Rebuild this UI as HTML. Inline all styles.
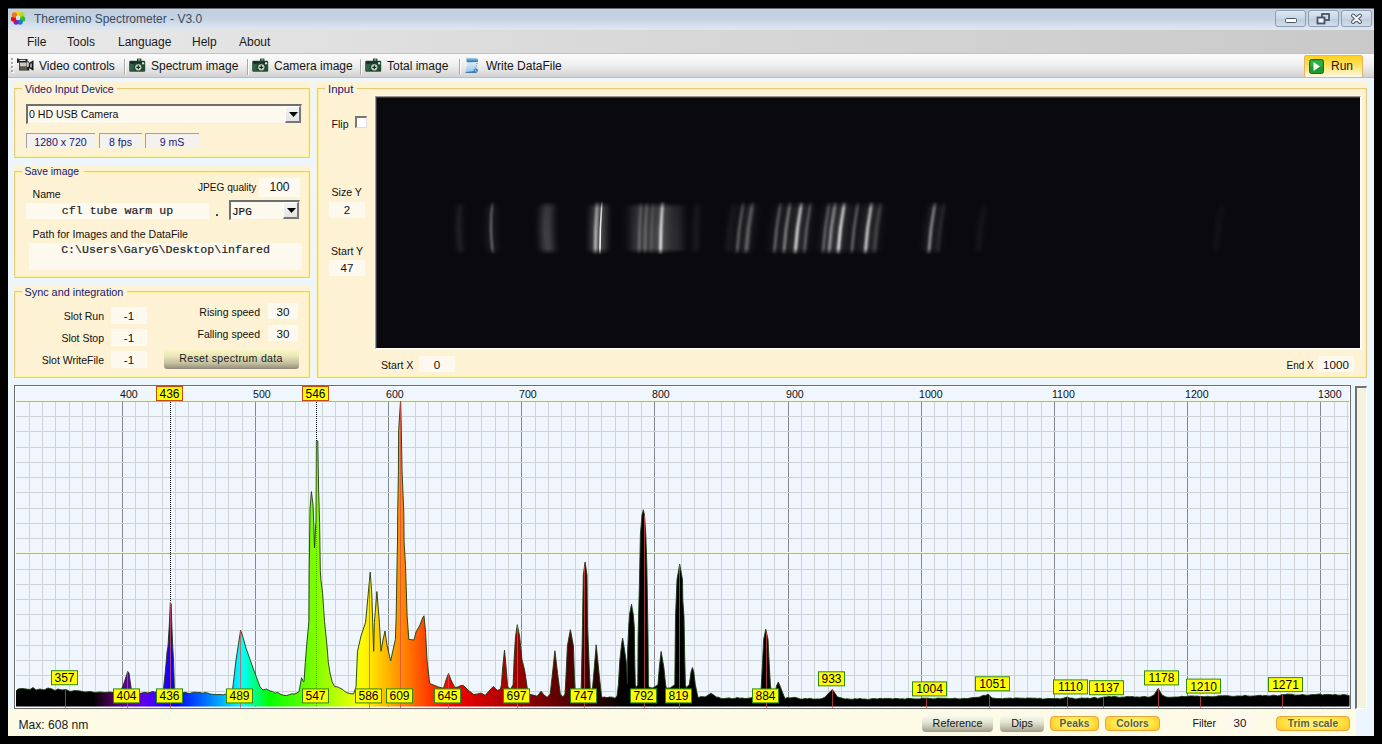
<!DOCTYPE html><html><head><meta charset="utf-8"><style>
html,body{margin:0;padding:0;}
body{width:1382px;height:744px;background:#000;position:relative;overflow:hidden;font-family:'Liberation Sans',sans-serif;}
.t{position:absolute;white-space:pre;}
.r{position:absolute;box-sizing:border-box;}
svg{position:absolute;}
</style></head><body>
<div class="r" style="left:8px;top:8px;width:1366px;height:728px;background:#edf5fd;"></div>
<div class="r" style="left:8px;top:8px;width:1366px;height:22px;border-top:1px solid #646a72;background:linear-gradient(#cdd9e4,#bfcfdd 8%,#c6d4e3 50%,#d8e3ef 85%,#dde7f2);"></div>
<div class="t" style="left:34px;top:13.30px;font-size:12px;line-height:12px;color:#3d4b5c;font-family:'Liberation Sans', sans-serif;">Theremino Spectrometer - V3.0</div>
<svg style="left:9px;top:9px" width="18" height="18" viewBox="0 0 18 18"><circle cx="9.10" cy="4.30" r="2.7" fill="#f8d020"/><circle cx="12.70" cy="6.03" r="2.7" fill="#a8e020"/><circle cx="13.58" cy="9.92" r="2.7" fill="#30c020"/><circle cx="11.10" cy="13.04" r="2.7" fill="#1080d0"/><circle cx="7.10" cy="13.04" r="2.7" fill="#8020c0"/><circle cx="4.62" cy="9.92" r="2.7" fill="#e01010"/><circle cx="5.50" cy="6.03" r="2.7" fill="#f07818"/><circle cx="9.1" cy="8.9" r="2.3" fill="#d8e2ec"/></svg>
<div class="r" style="left:1275px;top:10px;width:31px;height:17px;border:1px solid #8d9db3;border-radius:3px;background:linear-gradient(#dfe8f3,#c9d6e6 50%,#bccbde 51%,#d3deeb);"></div>
<div class="r" style="left:1308px;top:10px;width:31px;height:17px;border:1px solid #8d9db3;border-radius:3px;background:linear-gradient(#dfe8f3,#c9d6e6 50%,#bccbde 51%,#d3deeb);"></div>
<div class="r" style="left:1341px;top:10px;width:31px;height:17px;border:1px solid #8d9db3;border-radius:3px;background:linear-gradient(#dfe8f3,#c9d6e6 50%,#bccbde 51%,#d3deeb);"></div>
<svg style="left:1275px;top:10px" width="100" height="17"><rect x="10.5" y="8.5" width="11" height="4" rx="1" fill="#fff" stroke="#4a5464" stroke-width="1"/><rect x="47" y="4" width="7" height="6" fill="none" stroke="#4a5464" stroke-width="1.8"/><rect x="42.5" y="7.5" width="7" height="6" fill="#dfe8f3" stroke="#4a5464" stroke-width="1.8"/><rect x="44.5" y="9.5" width="3" height="2" fill="#fff"/><path d="M78 5.5 L85 12 M85 5.5 L78 12" stroke="#4a5464" stroke-width="4" stroke-linecap="round"/><path d="M78 5.5 L85 12 M85 5.5 L78 12" stroke="#f4f4f4" stroke-width="2" stroke-linecap="round"/></svg>
<div class="r" style="left:8px;top:30px;width:1366px;height:24px;background:linear-gradient(90deg,#e9e9e9,#dadada 40%,#c9c9c9);border-bottom:1px solid #c2c2c2;"></div>
<div class="t" style="left:27px;top:36.30px;font-size:12px;line-height:12px;color:#1a1a1a;font-family:'Liberation Sans', sans-serif;">File</div>
<div class="t" style="left:67px;top:36.30px;font-size:12px;line-height:12px;color:#1a1a1a;font-family:'Liberation Sans', sans-serif;">Tools</div>
<div class="t" style="left:118px;top:36.30px;font-size:12px;line-height:12px;color:#1a1a1a;font-family:'Liberation Sans', sans-serif;">Language</div>
<div class="t" style="left:192px;top:36.30px;font-size:12px;line-height:12px;color:#1a1a1a;font-family:'Liberation Sans', sans-serif;">Help</div>
<div class="t" style="left:239px;top:36.30px;font-size:12px;line-height:12px;color:#1a1a1a;font-family:'Liberation Sans', sans-serif;">About</div>
<div class="r" style="left:8px;top:54px;width:1366px;height:24px;background:linear-gradient(#fbfbfb,#f0f0f0 45%,#dedede 80%,#d2d2d2);border-bottom:1px solid #bcbcbc;"></div>
<div class="r" style="left:12px;top:59px;width:2px;height:2px;background:#ffffff;"></div>
<div class="r" style="left:11px;top:58px;width:2px;height:2px;background:#a8a8a8;"></div>
<div class="r" style="left:12px;top:63px;width:2px;height:2px;background:#ffffff;"></div>
<div class="r" style="left:11px;top:62px;width:2px;height:2px;background:#a8a8a8;"></div>
<div class="r" style="left:12px;top:67px;width:2px;height:2px;background:#ffffff;"></div>
<div class="r" style="left:11px;top:66px;width:2px;height:2px;background:#a8a8a8;"></div>
<div class="r" style="left:12px;top:71px;width:2px;height:2px;background:#ffffff;"></div>
<div class="r" style="left:11px;top:70px;width:2px;height:2px;background:#a8a8a8;"></div>
<div class="t" style="left:39px;top:60.30px;font-size:12px;line-height:12px;color:#151515;font-family:'Liberation Sans', sans-serif;">Video controls</div>
<div class="t" style="left:151px;top:60.30px;font-size:12px;line-height:12px;color:#151515;font-family:'Liberation Sans', sans-serif;">Spectrum image</div>
<div class="t" style="left:274px;top:60.30px;font-size:12px;line-height:12px;color:#151515;font-family:'Liberation Sans', sans-serif;">Camera image</div>
<div class="t" style="left:387px;top:60.30px;font-size:12px;line-height:12px;color:#151515;font-family:'Liberation Sans', sans-serif;">Total image</div>
<div class="t" style="left:486px;top:60.30px;font-size:12px;line-height:12px;color:#151515;font-family:'Liberation Sans', sans-serif;">Write DataFile</div>
<div class="r" style="left:124px;top:59px;width:2px;height:16px;background:#a8a8a8;border-right:1px solid #fff;"></div>
<div class="r" style="left:247px;top:59px;width:2px;height:16px;background:#a8a8a8;border-right:1px solid #fff;"></div>
<div class="r" style="left:360px;top:59px;width:2px;height:16px;background:#a8a8a8;border-right:1px solid #fff;"></div>
<div class="r" style="left:459px;top:59px;width:2px;height:16px;background:#a8a8a8;border-right:1px solid #fff;"></div>
<svg style="left:17px;top:58px" width="17" height="14" viewBox="0 0 17 14"><rect x="0" y="0.5" width="1.6" height="4.5" fill="#202020"/><rect x="1" y="1" width="9.5" height="3" fill="#262626"/><rect x="2.5" y="1.8" width="6" height="1.2" fill="#d8d8d8"/><rect x="2.2" y="3.5" width="10" height="9" fill="#1c1c1c"/><rect x="3" y="4.5" width="6.5" height="4" fill="#c8c8c8"/><rect x="9.8" y="4.3" width="2" height="4.5" fill="#e0c8c8"/><rect x="3.2" y="9" width="7" height="3" fill="#5a5a38"/><path d="M12 5 L16 2.5 L16.5 2.5 L16.5 12.5 L16 12.5 L12 10 Z" fill="#1a1a1a"/><rect x="13" y="5.5" width="2" height="4" fill="#9a9a9a"/></svg>
<svg style="left:129px;top:58px" width="17" height="15" viewBox="0 0 17 15"><rect x="8" y="0.6" width="4.4" height="3" fill="#1b3d28"/><rect x="9.1" y="1.5" width="2.2" height="1" fill="#d8e8dc"/><rect x="0.2" y="2.8" width="16" height="11" rx="1.2" fill="#234c35"/><rect x="1" y="3.4" width="14.4" height="2" fill="#163524"/><rect x="2.5" y="4" width="2" height="1.3" fill="#0c2014"/><rect x="13" y="4.3" width="2.2" height="2" fill="#d0ecd8"/><rect x="1" y="6" width="3.5" height="6.5" fill="#2f6048"/><circle cx="9.3" cy="9.3" r="3.1" fill="#d4d8cc"/><path d="M9.3 7.3 L9.3 11.3 M7.3 9.3 L11.3 9.3" stroke="#1a2a1e" stroke-width="1.2"/></svg>
<svg style="left:252px;top:58px" width="17" height="15" viewBox="0 0 17 15"><rect x="8" y="0.6" width="4.4" height="3" fill="#1b3d28"/><rect x="9.1" y="1.5" width="2.2" height="1" fill="#d8e8dc"/><rect x="0.2" y="2.8" width="16" height="11" rx="1.2" fill="#234c35"/><rect x="1" y="3.4" width="14.4" height="2" fill="#163524"/><rect x="2.5" y="4" width="2" height="1.3" fill="#0c2014"/><rect x="13" y="4.3" width="2.2" height="2" fill="#d0ecd8"/><rect x="1" y="6" width="3.5" height="6.5" fill="#2f6048"/><circle cx="9.3" cy="9.3" r="3.1" fill="#d4d8cc"/><path d="M9.3 7.3 L9.3 11.3 M7.3 9.3 L11.3 9.3" stroke="#1a2a1e" stroke-width="1.2"/></svg>
<svg style="left:365px;top:58px" width="17" height="15" viewBox="0 0 17 15"><rect x="8" y="0.6" width="4.4" height="3" fill="#1b3d28"/><rect x="9.1" y="1.5" width="2.2" height="1" fill="#d8e8dc"/><rect x="0.2" y="2.8" width="16" height="11" rx="1.2" fill="#234c35"/><rect x="1" y="3.4" width="14.4" height="2" fill="#163524"/><rect x="2.5" y="4" width="2" height="1.3" fill="#0c2014"/><rect x="13" y="4.3" width="2.2" height="2" fill="#d0ecd8"/><rect x="1" y="6" width="3.5" height="6.5" fill="#2f6048"/><circle cx="9.3" cy="9.3" r="3.1" fill="#d4d8cc"/><path d="M9.3 7.3 L9.3 11.3 M7.3 9.3 L11.3 9.3" stroke="#1a2a1e" stroke-width="1.2"/></svg>
<svg style="left:464px;top:57px" width="16" height="18" viewBox="0 0 16 18"><defs><linearGradient id="sp" x1="0" y1="0" x2="0" y2="1"><stop offset="0" stop-color="#e4f2fb"/><stop offset="1" stop-color="#9cc8ea"/></linearGradient><linearGradient id="sr" x1="0" y1="0" x2="0" y2="1"><stop offset="0" stop-color="#9fd4f4"/><stop offset="0.5" stop-color="#5f9cd0"/><stop offset="1" stop-color="#2f6aa0"/></linearGradient></defs><path d="M3.5 4.5 L13.5 4 L11.5 14 L1.5 15 Z" fill="url(#sp)"/><path d="M13.5 4 L12.8 7 M12.5 8.5 L11.8 11.5" stroke="#4a7ca8" stroke-width="1" stroke-dasharray="1 1"/><path d="M2.5 1.5 Q2 0.8 3 0.8 L13 1.2 Q14.5 1.5 14 3.5 Q13.5 5 12.5 5 L3.5 5.2 Q2 5 2.5 1.5 Z" fill="url(#sr)"/><path d="M9.5 12 L13 11.5 Q14.5 12.5 13.5 15 Q12.5 16.2 11 16 L2 16 Q1 15.5 1.5 15 L10 14 Z" fill="#3f7bb0"/><path d="M10.5 12.5 Q12.5 12.8 12 15" stroke="#9fd0f0" stroke-width="1" fill="none"/></svg>
<div class="r" style="left:1304px;top:55px;width:59px;height:23px;border:1px solid #e6b55c;border-radius:2px;background:linear-gradient(#ffd21e,#ffe36a 50%,#fff3c6 85%,#fff8e4);"></div>
<svg style="left:1309px;top:59px" width="15" height="15" viewBox="0 0 15 15"><rect x="0.5" y="0.5" width="14" height="14" rx="2" fill="#1e9a30" stroke="#107020"/><rect x="1.5" y="1.5" width="12" height="6" rx="1" fill="#3cc050" opacity="0.6"/><path d="M4.5 3 L11 7.5 L4.5 12 Z" fill="#f4fff4"/></svg>
<div class="t" style="left:1331px;top:60.30px;font-size:12px;line-height:12px;color:#1a1a1a;font-family:'Liberation Sans', sans-serif;">Run</div>
<div class="r" style="left:14px;top:82px;width:297px;height:76px;background:#fdf2d4;"></div>
<div class="r" style="left:14px;top:88px;width:296px;height:70px;border:1px solid #e3cd7c;"></div>
<div class="r" style="left:15px;top:89px;width:294px;height:68px;border:1px solid #fdf39c;"></div>
<div class="r" style="left:22px;top:85px;width:95px;height:7px;background:#fdf2d4;"></div>
<div class="t" style="left:25px;top:84.49px;font-size:10.6px;line-height:10.6px;color:#17176e;font-family:'Liberation Sans', sans-serif;">Video Input Device</div>
<div class="r" style="left:14px;top:165px;width:297px;height:113px;background:#fdf2d4;"></div>
<div class="r" style="left:14px;top:171px;width:296px;height:107px;border:1px solid #e3cd7c;"></div>
<div class="r" style="left:15px;top:172px;width:294px;height:105px;border:1px solid #fdf39c;"></div>
<div class="r" style="left:21.5px;top:168px;width:62.0px;height:7px;background:#fdf2d4;"></div>
<div class="t" style="left:24.5px;top:167.49px;font-size:10.3px;line-height:10.3px;color:#17176e;font-family:'Liberation Sans', sans-serif;">Save image</div>
<div class="r" style="left:14px;top:285px;width:297px;height:93px;background:#fdf2d4;"></div>
<div class="r" style="left:14px;top:291px;width:296px;height:87px;border:1px solid #e3cd7c;"></div>
<div class="r" style="left:15px;top:292px;width:294px;height:85px;border:1px solid #fdf39c;"></div>
<div class="r" style="left:21.5px;top:288px;width:105.0px;height:7px;background:#fdf2d4;"></div>
<div class="t" style="left:24.5px;top:287.49px;font-size:10.85px;line-height:10.85px;color:#17176e;font-family:'Liberation Sans', sans-serif;">Sync and integration</div>
<div class="r" style="left:316px;top:82px;width:1052px;height:296px;background:#fdf2d4;"></div>
<div class="r" style="left:317px;top:88px;width:1050px;height:290px;border:1px solid #e3cd7c;"></div>
<div class="r" style="left:318px;top:89px;width:1048px;height:288px;border:1px solid #fdf39c;"></div>
<div class="r" style="left:325px;top:85px;width:32px;height:7px;background:#fdf2d4;"></div>
<div class="t" style="left:328px;top:84.49px;font-size:11.4px;line-height:11.4px;color:#17176e;font-family:'Liberation Sans', sans-serif;">Input</div>
<div class="r" style="left:26px;top:104px;width:276px;height:20px;background:#fdf9ee;border-top:2px solid #6f6f6f;border-left:2px solid #6f6f6f;border-bottom:1px solid #f4f0e0;border-right:1px solid #f4f0e0;"></div>
<div class="r" style="left:285px;top:106px;width:16px;height:17px;background:linear-gradient(#f4f4f4,#e4e4e4);border-right:2px solid #777;border-bottom:2px solid #777;border-top:1px solid #fff;border-left:1px solid #fff;"></div>
<svg style="left:289.0px;top:112.0px" width="9" height="5"><path d="M0 0 L9 0 L4.5 5 Z" fill="#000"/></svg>
<div class="t" style="left:29px;top:109.49px;font-size:10.6px;line-height:10.6px;color:#111;font-family:'Liberation Sans', sans-serif;">0 HD USB Camera</div>
<div class="r" style="left:26px;top:133px;width:69px;height:15px;background:#f3f2ee;border-top:1px solid #a0a0a0;border-left:1px solid #a0a0a0;"></div>
<div class="t" style="left:26.0px;width:69px;text-align:center;top:136.99px;font-size:10.6px;line-height:10.6px;color:#17176e;font-family:'Liberation Sans', sans-serif;">1280 x 720</div>
<div class="r" style="left:99px;top:133px;width:43px;height:15px;background:#f3f2ee;border-top:1px solid #a0a0a0;border-left:1px solid #a0a0a0;"></div>
<div class="t" style="left:99.0px;width:43px;text-align:center;top:136.99px;font-size:10.6px;line-height:10.6px;color:#17176e;font-family:'Liberation Sans', sans-serif;">8 fps</div>
<div class="r" style="left:145px;top:133px;width:54px;height:15px;background:#f3f2ee;border-top:1px solid #a0a0a0;border-left:1px solid #a0a0a0;"></div>
<div class="t" style="left:145.0px;width:54px;text-align:center;top:136.99px;font-size:10.6px;line-height:10.6px;color:#17176e;font-family:'Liberation Sans', sans-serif;">9 mS</div>
<div class="t" style="left:32.5px;top:188.99px;font-size:10.6px;line-height:10.6px;color:#111;font-family:'Liberation Sans', sans-serif;">Name</div>
<div class="t" style="left:198px;top:182.91px;font-size:10.1px;line-height:10.1px;color:#111;font-family:'Liberation Sans', sans-serif;">JPEG quality</div>
<div class="r" style="left:259px;top:178px;width:41px;height:19px;background:#fdf9ef;"></div>
<div class="t" style="left:259.5px;width:40px;text-align:center;top:181.30px;font-size:12px;line-height:12px;color:#111;font-family:'Liberation Sans', sans-serif;">100</div>
<div class="r" style="left:26px;top:203px;width:183px;height:16px;background:#fdf9ef;"></div>
<div class="t" style="left:26.0px;width:183px;text-align:center;top:204.98px;font-size:11.6px;line-height:11.6px;color:#222;font-family:'Liberation Mono', monospace;-webkit-text-stroke:0.2px #222;">cfl tube warm up</div>
<div class="r" style="left:216px;top:214px;width:2px;height:2px;background:#3a3a3a;border-radius:0.5px;"></div>
<div class="r" style="left:229px;top:200px;width:71px;height:20px;background:#fdf9ee;border-top:2px solid #6f6f6f;border-left:2px solid #6f6f6f;border-bottom:1px solid #f4f0e0;border-right:1px solid #f4f0e0;"></div>
<div class="r" style="left:283px;top:202px;width:16px;height:17px;background:linear-gradient(#f4f4f4,#e4e4e4);border-right:2px solid #777;border-bottom:2px solid #777;border-top:1px solid #fff;border-left:1px solid #fff;"></div>
<svg style="left:287.0px;top:208.0px" width="9" height="5"><path d="M0 0 L9 0 L4.5 5 Z" fill="#000"/></svg>
<div class="t" style="left:232px;top:207.14px;font-size:11px;line-height:11px;color:#111;font-family:'Liberation Mono', monospace;-webkit-text-stroke:0.2px #111;">JPG</div>
<div class="t" style="left:32.5px;top:229.49px;font-size:10.6px;line-height:10.6px;color:#111;font-family:'Liberation Sans', sans-serif;">Path for Images and the DataFile</div>
<div class="r" style="left:29px;top:243px;width:273px;height:27px;background:#fdf9ef;"></div>
<div class="t" style="left:29.0px;width:273px;text-align:center;top:243.98px;font-size:11.6px;line-height:11.6px;color:#222;font-family:'Liberation Mono', monospace;-webkit-text-stroke:0.2px #222;">C:\Users\GaryG\Desktop\infared</div>
<div class="t" style="right:1278px;top:310.77px;font-size:10.5px;line-height:10.5px;color:#111;font-family:'Liberation Sans', sans-serif;">Slot Run</div>
<div class="r" style="left:111px;top:307px;width:36px;height:17px;background:#fdf9ef;"></div>
<div class="t" style="left:111.0px;width:36px;text-align:center;top:309.84px;font-size:11.6px;line-height:11.6px;color:#111;font-family:'Liberation Sans', sans-serif;">-1</div>
<div class="t" style="right:1278px;top:332.77px;font-size:10.5px;line-height:10.5px;color:#111;font-family:'Liberation Sans', sans-serif;">Slot Stop</div>
<div class="r" style="left:111px;top:329px;width:36px;height:17px;background:#fdf9ef;"></div>
<div class="t" style="left:111.0px;width:36px;text-align:center;top:331.84px;font-size:11.6px;line-height:11.6px;color:#111;font-family:'Liberation Sans', sans-serif;">-1</div>
<div class="t" style="right:1278px;top:354.77px;font-size:10.5px;line-height:10.5px;color:#111;font-family:'Liberation Sans', sans-serif;">Slot WriteFile</div>
<div class="r" style="left:111px;top:351px;width:36px;height:17px;background:#fdf9ef;"></div>
<div class="t" style="left:111.0px;width:36px;text-align:center;top:353.84px;font-size:11.6px;line-height:11.6px;color:#111;font-family:'Liberation Sans', sans-serif;">-1</div>
<div class="t" style="right:1122px;top:307.07px;font-size:10.5px;line-height:10.5px;color:#111;font-family:'Liberation Sans', sans-serif;">Rising speed</div>
<div class="r" style="left:268px;top:303px;width:30px;height:16px;background:#fdf9ef;"></div>
<div class="t" style="left:268.0px;width:30px;text-align:center;top:306.14px;font-size:11.6px;line-height:11.6px;color:#111;font-family:'Liberation Sans', sans-serif;">30</div>
<div class="t" style="right:1122px;top:328.57px;font-size:10.5px;line-height:10.5px;color:#111;font-family:'Liberation Sans', sans-serif;">Falling speed</div>
<div class="r" style="left:268px;top:325px;width:30px;height:16px;background:#fdf9ef;"></div>
<div class="t" style="left:268.0px;width:30px;text-align:center;top:327.64px;font-size:11.6px;line-height:11.6px;color:#111;font-family:'Liberation Sans', sans-serif;">30</div>
<div class="r" style="left:164px;top:350px;width:135px;height:19px;border-radius:3px;background:linear-gradient(#f9f6c4,#ebe7b8 30%,#c4bfa0 70%,#8f8a78);"></div>
<div class="t" style="left:163.5px;width:135px;text-align:center;top:353.49px;font-size:10.6px;line-height:10.6px;color:#1a1a1a;font-family:'Liberation Sans', sans-serif;letter-spacing:0.3px;">Reset spectrum data</div>
<div class="t" style="left:331.5px;top:119.49px;font-size:10.6px;line-height:10.6px;color:#111;font-family:'Liberation Sans', sans-serif;">Flip</div>
<div class="r" style="left:355px;top:116px;width:12px;height:12px;background:#fff;border-top:2px solid #777;border-left:2px solid #777;border-right:1px solid #ddd;border-bottom:1px solid #ddd;"></div>
<div class="t" style="left:331.5px;top:187.49px;font-size:10.6px;line-height:10.6px;color:#111;font-family:'Liberation Sans', sans-serif;">Size Y</div>
<div class="r" style="left:329px;top:202px;width:36px;height:16px;background:#fdf9ef;"></div>
<div class="t" style="left:329.0px;width:36px;text-align:center;top:204.14px;font-size:11.6px;line-height:11.6px;color:#111;font-family:'Liberation Sans', sans-serif;">2</div>
<div class="t" style="left:331px;top:246.49px;font-size:10.6px;line-height:10.6px;color:#111;font-family:'Liberation Sans', sans-serif;">Start Y</div>
<div class="r" style="left:329px;top:260px;width:36px;height:16px;background:#fdf9ef;"></div>
<div class="t" style="left:329.0px;width:36px;text-align:center;top:262.14px;font-size:11.6px;line-height:11.6px;color:#111;font-family:'Liberation Sans', sans-serif;">47</div>
<div class="t" style="left:381px;top:359.99px;font-size:10.6px;line-height:10.6px;color:#111;font-family:'Liberation Sans', sans-serif;">Start X</div>
<div class="r" style="left:419px;top:356px;width:36px;height:16px;background:#fdf9ef;"></div>
<div class="t" style="left:419.0px;width:36px;text-align:center;top:359.14px;font-size:11.6px;line-height:11.6px;color:#111;font-family:'Liberation Sans', sans-serif;">0</div>
<div class="t" style="left:1286.5px;top:360.50px;font-size:10px;line-height:10px;color:#111;font-family:'Liberation Sans', sans-serif;">End X</div>
<div class="r" style="left:1318px;top:356px;width:36px;height:16px;background:#fdf9ef;"></div>
<div class="t" style="left:1318.0px;width:36px;text-align:center;top:359.14px;font-size:11.6px;line-height:11.6px;color:#111;font-family:'Liberation Sans', sans-serif;">1000</div>
<div class="r" style="left:374px;top:95px;width:988px;height:255px;border-top:1px solid #fffbeb;border-left:1px solid #fffbeb;border-right:1px solid #fff9ea;border-bottom:1px solid #fff9ea;"></div>
<div class="r" style="left:375px;top:96px;width:986px;height:253px;border-top:1px solid #9b978c;border-left:1px solid #9b978c;border-right:1px solid #fdfdfd;border-bottom:1px solid #fdfdfd;"></div>
<div class="r" style="left:376px;top:97px;width:984px;height:251px;border-top:1px solid #3a3a3a;border-left:1px solid #3a3a3a;background:#0a090d;"></div>
<svg style="left:377px;top:98px" width="983" height="250" viewBox="377 98 983 250"><defs><linearGradient id="vf" x1="0" y1="0" x2="0" y2="1"><stop offset="0" stop-color="#fff" stop-opacity="0.3"/><stop offset="0.12" stop-color="#fff" stop-opacity="1"/><stop offset="0.85" stop-color="#fff" stop-opacity="1"/><stop offset="1" stop-color="#fff" stop-opacity="0.3"/></linearGradient><filter id="b0_6" filterUnits="userSpaceOnUse" x="377" y="98" width="983" height="250"><feGaussianBlur stdDeviation="0.6 1.5"/></filter><filter id="b0_8" filterUnits="userSpaceOnUse" x="377" y="98" width="983" height="250"><feGaussianBlur stdDeviation="0.8 1.5"/></filter><filter id="b0_9" filterUnits="userSpaceOnUse" x="377" y="98" width="983" height="250"><feGaussianBlur stdDeviation="0.9 1.5"/></filter><filter id="b1_1" filterUnits="userSpaceOnUse" x="377" y="98" width="983" height="250"><feGaussianBlur stdDeviation="1.1 1.5"/></filter><filter id="b1_2" filterUnits="userSpaceOnUse" x="377" y="98" width="983" height="250"><feGaussianBlur stdDeviation="1.2 1.5"/></filter><filter id="b1_3" filterUnits="userSpaceOnUse" x="377" y="98" width="983" height="250"><feGaussianBlur stdDeviation="1.3 1.5"/></filter><filter id="b1_4" filterUnits="userSpaceOnUse" x="377" y="98" width="983" height="250"><feGaussianBlur stdDeviation="1.4 1.5"/></filter><filter id="b1_6" filterUnits="userSpaceOnUse" x="377" y="98" width="983" height="250"><feGaussianBlur stdDeviation="1.6 1.5"/></filter><filter id="b2" filterUnits="userSpaceOnUse" x="377" y="98" width="983" height="250"><feGaussianBlur stdDeviation="2 1.5"/></filter><filter id="b2_5" filterUnits="userSpaceOnUse" x="377" y="98" width="983" height="250"><feGaussianBlur stdDeviation="2.5 1.5"/></filter><filter id="b4" filterUnits="userSpaceOnUse" x="377" y="98" width="983" height="250"><feGaussianBlur stdDeviation="4 1.5"/></filter><filter id="b5_0" filterUnits="userSpaceOnUse" x="377" y="98" width="983" height="250"><feGaussianBlur stdDeviation="5.0 1.5"/></filter><mask id="vm" maskUnits="userSpaceOnUse" x="377" y="98" width="983" height="250"><rect x="377" y="98" width="983" height="250" fill="url(#vf2)"/></mask><linearGradient id="vf2" gradientUnits="userSpaceOnUse" x1="0" y1="200" x2="0" y2="256"><stop offset="0" stop-color="#fff" stop-opacity="0"/><stop offset="0.15" stop-color="#fff" stop-opacity="0.85"/><stop offset="0.6" stop-color="#fff" stop-opacity="1"/><stop offset="0.86" stop-color="#fff" stop-opacity="1"/><stop offset="1" stop-color="#fff" stop-opacity="0"/></linearGradient></defs><g mask="url(#vm)"><rect x="630" y="204" width="52" height="48" fill="#fff" opacity="0.15" filter="url(#b5_0)"/><rect x="591" y="204" width="15" height="48" fill="#fff" opacity="0.12" filter="url(#b5_0)"/><path d="M460.3 202 Q457.1 227.5 460.8 254" stroke="#fff" stroke-opacity="0.045" stroke-width="6" fill="none" filter="url(#b5_0)"/><path d="M460.3 202 Q457.1 227.5 460.8 254" stroke="#fff" stroke-opacity="0.13" stroke-width="3" fill="none" filter="url(#b2)"/><path d="M492.5 202 Q489.2 227.5 493.0 254" stroke="#fff" stroke-opacity="0.175" stroke-width="4.6" fill="none" filter="url(#b5_0)"/><path d="M492.5 202 Q489.2 227.5 493.0 254" stroke="#fff" stroke-opacity="0.5" stroke-width="1.6" fill="none" filter="url(#b0_8)"/><path d="M548.0 202 Q544.8 227.5 548.5 254" stroke="#fff" stroke-opacity="0.087" stroke-width="11" fill="none" filter="url(#b5_0)"/><path d="M548.0 202 Q544.8 227.5 548.5 254" stroke="#fff" stroke-opacity="0.25" stroke-width="8" fill="none" filter="url(#b4)"/><path d="M597.3 202 Q595.3 227.5 595.3 254" stroke="#fff" stroke-opacity="0.210" stroke-width="6" fill="none" filter="url(#b5_0)"/><path d="M597.3 202 Q595.3 227.5 595.3 254" stroke="#fff" stroke-opacity="0.6" stroke-width="3" fill="none" filter="url(#b1_2)"/><path d="M601.9 202 Q599.9 227.5 599.9 254" stroke="#fff" stroke-opacity="0.332" stroke-width="4.6" fill="none" filter="url(#b5_0)"/><path d="M601.9 202 Q599.9 227.5 599.9 254" stroke="#fff" stroke-opacity="0.95" stroke-width="1.6" fill="none" filter="url(#b0_6)"/><path d="M641.0 202 Q639.0 227.5 639.0 254" stroke="#fff" stroke-opacity="0.105" stroke-width="5" fill="none" filter="url(#b5_0)"/><path d="M641.0 202 Q639.0 227.5 639.0 254" stroke="#fff" stroke-opacity="0.3" stroke-width="2" fill="none" filter="url(#b1_2)"/><path d="M647.0 202 Q645.0 227.5 645.0 254" stroke="#fff" stroke-opacity="0.105" stroke-width="5" fill="none" filter="url(#b5_0)"/><path d="M647.0 202 Q645.0 227.5 645.0 254" stroke="#fff" stroke-opacity="0.3" stroke-width="2" fill="none" filter="url(#b1_2)"/><path d="M653.1 202 Q651.1 227.5 651.1 254" stroke="#fff" stroke-opacity="0.070" stroke-width="5" fill="none" filter="url(#b5_0)"/><path d="M653.1 202 Q651.1 227.5 651.1 254" stroke="#fff" stroke-opacity="0.2" stroke-width="2" fill="none" filter="url(#b1_3)"/><path d="M662.5 202 Q660.5 227.5 660.5 254" stroke="#fff" stroke-opacity="0.332" stroke-width="5.6" fill="none" filter="url(#b5_0)"/><path d="M662.5 202 Q660.5 227.5 660.5 254" stroke="#fff" stroke-opacity="0.95" stroke-width="2.6" fill="none" filter="url(#b0_9)"/><path d="M697.5 202 Q695.5 227.5 695.5 254" stroke="#fff" stroke-opacity="0.028" stroke-width="7" fill="none" filter="url(#b5_0)"/><path d="M697.5 202 Q695.5 227.5 695.5 254" stroke="#fff" stroke-opacity="0.08" stroke-width="4" fill="none" filter="url(#b2_5)"/><path d="M734.0 202 Q729.2 227.5 727.5 254" stroke="#fff" stroke-opacity="0.028" stroke-width="6" fill="none" filter="url(#b5_0)"/><path d="M734.0 202 Q729.2 227.5 727.5 254" stroke="#fff" stroke-opacity="0.08" stroke-width="3" fill="none" filter="url(#b2)"/><path d="M743.4 202 Q738.6 227.5 736.9 254" stroke="#fff" stroke-opacity="0.105" stroke-width="5.8" fill="none" filter="url(#b5_0)"/><path d="M743.4 202 Q738.6 227.5 736.9 254" stroke="#fff" stroke-opacity="0.3" stroke-width="2.8" fill="none" filter="url(#b1_3)"/><path d="M752.5 202 Q747.8 227.5 746.0 254" stroke="#fff" stroke-opacity="0.140" stroke-width="6" fill="none" filter="url(#b5_0)"/><path d="M752.5 202 Q747.8 227.5 746.0 254" stroke="#fff" stroke-opacity="0.4" stroke-width="3" fill="none" filter="url(#b1_4)"/><path d="M780.7 202 Q776.0 227.5 774.2 254" stroke="#fff" stroke-opacity="0.112" stroke-width="5.8" fill="none" filter="url(#b5_0)"/><path d="M780.7 202 Q776.0 227.5 774.2 254" stroke="#fff" stroke-opacity="0.32" stroke-width="2.8" fill="none" filter="url(#b1_3)"/><path d="M790.2 202 Q785.5 227.5 783.7 254" stroke="#fff" stroke-opacity="0.147" stroke-width="6" fill="none" filter="url(#b5_0)"/><path d="M790.2 202 Q785.5 227.5 783.7 254" stroke="#fff" stroke-opacity="0.42" stroke-width="3" fill="none" filter="url(#b1_3)"/><path d="M801.6 202 Q796.9 227.5 795.1 254" stroke="#fff" stroke-opacity="0.280" stroke-width="6" fill="none" filter="url(#b5_0)"/><path d="M801.6 202 Q796.9 227.5 795.1 254" stroke="#fff" stroke-opacity="0.8" stroke-width="3" fill="none" filter="url(#b1_1)"/><path d="M810.7 202 Q806.0 227.5 804.2 254" stroke="#fff" stroke-opacity="0.105" stroke-width="5.8" fill="none" filter="url(#b5_0)"/><path d="M810.7 202 Q806.0 227.5 804.2 254" stroke="#fff" stroke-opacity="0.3" stroke-width="2.8" fill="none" filter="url(#b1_3)"/><path d="M829.4 202 Q824.6 227.5 822.9 254" stroke="#fff" stroke-opacity="0.105" stroke-width="5.8" fill="none" filter="url(#b5_0)"/><path d="M829.4 202 Q824.6 227.5 822.9 254" stroke="#fff" stroke-opacity="0.3" stroke-width="2.8" fill="none" filter="url(#b1_3)"/><path d="M835.4 202 Q830.6 227.5 828.9 254" stroke="#fff" stroke-opacity="0.175" stroke-width="6" fill="none" filter="url(#b5_0)"/><path d="M835.4 202 Q830.6 227.5 828.9 254" stroke="#fff" stroke-opacity="0.5" stroke-width="3" fill="none" filter="url(#b1_2)"/><path d="M844.5 202 Q839.8 227.5 838.0 254" stroke="#fff" stroke-opacity="0.297" stroke-width="6" fill="none" filter="url(#b5_0)"/><path d="M844.5 202 Q839.8 227.5 838.0 254" stroke="#fff" stroke-opacity="0.85" stroke-width="3" fill="none" filter="url(#b1_1)"/><path d="M858.1 202 Q853.4 227.5 851.6 254" stroke="#fff" stroke-opacity="0.115" stroke-width="5.8" fill="none" filter="url(#b5_0)"/><path d="M858.1 202 Q853.4 227.5 851.6 254" stroke="#fff" stroke-opacity="0.33" stroke-width="2.8" fill="none" filter="url(#b1_3)"/><path d="M871.7 202 Q867.0 227.5 865.2 254" stroke="#fff" stroke-opacity="0.262" stroke-width="6" fill="none" filter="url(#b5_0)"/><path d="M871.7 202 Q867.0 227.5 865.2 254" stroke="#fff" stroke-opacity="0.75" stroke-width="3" fill="none" filter="url(#b1_1)"/><path d="M880.8 202 Q876.0 227.5 874.3 254" stroke="#fff" stroke-opacity="0.087" stroke-width="5.8" fill="none" filter="url(#b5_0)"/><path d="M880.8 202 Q876.0 227.5 874.3 254" stroke="#fff" stroke-opacity="0.25" stroke-width="2.8" fill="none" filter="url(#b1_4)"/><path d="M935.1 202 Q930.4 227.5 928.6 254" stroke="#fff" stroke-opacity="0.175" stroke-width="5.8" fill="none" filter="url(#b5_0)"/><path d="M935.1 202 Q930.4 227.5 928.6 254" stroke="#fff" stroke-opacity="0.5" stroke-width="2.8" fill="none" filter="url(#b1_2)"/><path d="M944.1 202 Q939.4 227.5 937.6 254" stroke="#fff" stroke-opacity="0.049" stroke-width="5.5" fill="none" filter="url(#b5_0)"/><path d="M944.1 202 Q939.4 227.5 937.6 254" stroke="#fff" stroke-opacity="0.14" stroke-width="2.5" fill="none" filter="url(#b1_6)"/><path d="M984.5 202 Q979.8 227.5 978.0 254" stroke="#fff" stroke-opacity="0.028" stroke-width="5.5" fill="none" filter="url(#b5_0)"/><path d="M984.5 202 Q979.8 227.5 978.0 254" stroke="#fff" stroke-opacity="0.08" stroke-width="2.5" fill="none" filter="url(#b2)"/><path d="M1222.0 202 Q1217.2 227.5 1215.5 254" stroke="#fff" stroke-opacity="0.025" stroke-width="5" fill="none" filter="url(#b5_0)"/><path d="M1222.0 202 Q1217.2 227.5 1215.5 254" stroke="#fff" stroke-opacity="0.07" stroke-width="2" fill="none" filter="url(#b2)"/></g></svg>
<svg style="left:14px;top:385px" width="1337" height="324" viewBox="14 385 1337 324" shape-rendering="auto"><defs><linearGradient id="spec" gradientUnits="userSpaceOnUse" x1="14" y1="0" x2="1350" y2="0"><stop offset="0.0033" stop-color="#000000"/><stop offset="0.0073" stop-color="#000000"/><stop offset="0.0113" stop-color="#000000"/><stop offset="0.0153" stop-color="#000000"/><stop offset="0.0193" stop-color="#000000"/><stop offset="0.0232" stop-color="#000000"/><stop offset="0.0272" stop-color="#000000"/><stop offset="0.0312" stop-color="#000000"/><stop offset="0.0352" stop-color="#000000"/><stop offset="0.0392" stop-color="#000000"/><stop offset="0.0432" stop-color="#000000"/><stop offset="0.0472" stop-color="#000000"/><stop offset="0.0512" stop-color="#000000"/><stop offset="0.0551" stop-color="#000000"/><stop offset="0.0591" stop-color="#000000"/><stop offset="0.0631" stop-color="#170018"/><stop offset="0.0671" stop-color="#2c0031"/><stop offset="0.0711" stop-color="#3d0049"/><stop offset="0.0751" stop-color="#4a0061"/><stop offset="0.0791" stop-color="#550079"/><stop offset="0.0831" stop-color="#5c0092"/><stop offset="0.0870" stop-color="#6000aa"/><stop offset="0.0910" stop-color="#6100c2"/><stop offset="0.0950" stop-color="#5f00db"/><stop offset="0.0990" stop-color="#5900f3"/><stop offset="0.1030" stop-color="#4c00ff"/><stop offset="0.1070" stop-color="#3c00ff"/><stop offset="0.1110" stop-color="#2a00ff"/><stop offset="0.1150" stop-color="#1a00ff"/><stop offset="0.1189" stop-color="#0800ff"/><stop offset="0.1229" stop-color="#000aff"/><stop offset="0.1269" stop-color="#001fff"/><stop offset="0.1309" stop-color="#0033ff"/><stop offset="0.1349" stop-color="#0047ff"/><stop offset="0.1389" stop-color="#005cff"/><stop offset="0.1429" stop-color="#0070ff"/><stop offset="0.1469" stop-color="#0085ff"/><stop offset="0.1508" stop-color="#0099ff"/><stop offset="0.1548" stop-color="#00adff"/><stop offset="0.1588" stop-color="#00c2ff"/><stop offset="0.1628" stop-color="#00d6ff"/><stop offset="0.1668" stop-color="#00ebff"/><stop offset="0.1708" stop-color="#00ffff"/><stop offset="0.1748" stop-color="#00ffcc"/><stop offset="0.1787" stop-color="#00ff99"/><stop offset="0.1827" stop-color="#00ff66"/><stop offset="0.1867" stop-color="#00ff33"/><stop offset="0.1907" stop-color="#00ff00"/><stop offset="0.1947" stop-color="#0fff00"/><stop offset="0.1987" stop-color="#1dff00"/><stop offset="0.2027" stop-color="#2cff00"/><stop offset="0.2067" stop-color="#3aff00"/><stop offset="0.2106" stop-color="#49ff00"/><stop offset="0.2146" stop-color="#57ff00"/><stop offset="0.2186" stop-color="#66ff00"/><stop offset="0.2226" stop-color="#75ff00"/><stop offset="0.2266" stop-color="#83ff00"/><stop offset="0.2306" stop-color="#92ff00"/><stop offset="0.2346" stop-color="#a0ff00"/><stop offset="0.2386" stop-color="#afff00"/><stop offset="0.2425" stop-color="#bdff00"/><stop offset="0.2465" stop-color="#ccff00"/><stop offset="0.2505" stop-color="#dbff00"/><stop offset="0.2545" stop-color="#e9ff00"/><stop offset="0.2585" stop-color="#f8ff00"/><stop offset="0.2625" stop-color="#fff700"/><stop offset="0.2665" stop-color="#ffe700"/><stop offset="0.2705" stop-color="#ffd800"/><stop offset="0.2744" stop-color="#ffc800"/><stop offset="0.2784" stop-color="#ffb800"/><stop offset="0.2824" stop-color="#ffa900"/><stop offset="0.2864" stop-color="#ff9900"/><stop offset="0.2904" stop-color="#ff8900"/><stop offset="0.2944" stop-color="#ff7a00"/><stop offset="0.2984" stop-color="#ff6a00"/><stop offset="0.3023" stop-color="#ff5a00"/><stop offset="0.3063" stop-color="#ff4b00"/><stop offset="0.3103" stop-color="#ff3b00"/><stop offset="0.3143" stop-color="#ff2b00"/><stop offset="0.3183" stop-color="#ff1b00"/><stop offset="0.3223" stop-color="#ff0c00"/><stop offset="0.3263" stop-color="#fd0000"/><stop offset="0.3303" stop-color="#f50000"/><stop offset="0.3342" stop-color="#ee0000"/><stop offset="0.3382" stop-color="#e60000"/><stop offset="0.3422" stop-color="#de0000"/><stop offset="0.3462" stop-color="#d70000"/><stop offset="0.3502" stop-color="#cf0000"/><stop offset="0.3542" stop-color="#c70000"/><stop offset="0.3582" stop-color="#c00000"/><stop offset="0.3622" stop-color="#b80000"/><stop offset="0.3661" stop-color="#b00000"/><stop offset="0.3701" stop-color="#a90000"/><stop offset="0.3741" stop-color="#a10000"/><stop offset="0.3781" stop-color="#990000"/><stop offset="0.3821" stop-color="#920000"/><stop offset="0.3861" stop-color="#8a0000"/><stop offset="0.3901" stop-color="#820000"/><stop offset="0.3941" stop-color="#7b0000"/><stop offset="0.3980" stop-color="#730000"/><stop offset="0.4020" stop-color="#6b0000"/><stop offset="0.4060" stop-color="#640000"/><stop offset="0.4100" stop-color="#5c0000"/><stop offset="0.4140" stop-color="#540000"/><stop offset="0.4180" stop-color="#4d0000"/><stop offset="0.4220" stop-color="#450000"/><stop offset="0.4259" stop-color="#3d0000"/><stop offset="0.4299" stop-color="#360000"/><stop offset="0.4339" stop-color="#2e0000"/><stop offset="0.4379" stop-color="#260000"/><stop offset="0.4419" stop-color="#1f0000"/><stop offset="0.4459" stop-color="#170000"/><stop offset="0.4499" stop-color="#0f0000"/><stop offset="0.4539" stop-color="#080000"/><stop offset="0.4578" stop-color="#000000"/><stop offset="0.4618" stop-color="#000000"/><stop offset="0.4658" stop-color="#000000"/><stop offset="0.4698" stop-color="#000000"/><stop offset="0.4738" stop-color="#000000"/><stop offset="0.4778" stop-color="#000000"/><stop offset="0.4818" stop-color="#000000"/><stop offset="0.4858" stop-color="#000000"/><stop offset="0.4897" stop-color="#000000"/><stop offset="0.4937" stop-color="#000000"/><stop offset="0.4977" stop-color="#000000"/><stop offset="0.5017" stop-color="#000000"/><stop offset="0.5057" stop-color="#000000"/><stop offset="0.5097" stop-color="#000000"/><stop offset="0.5137" stop-color="#000000"/><stop offset="0.5177" stop-color="#000000"/><stop offset="0.5216" stop-color="#000000"/><stop offset="0.5256" stop-color="#000000"/><stop offset="0.5296" stop-color="#000000"/><stop offset="0.5336" stop-color="#000000"/><stop offset="0.5376" stop-color="#000000"/><stop offset="0.5416" stop-color="#000000"/><stop offset="0.5456" stop-color="#000000"/><stop offset="0.5496" stop-color="#000000"/><stop offset="0.5535" stop-color="#000000"/><stop offset="0.5575" stop-color="#000000"/><stop offset="0.5615" stop-color="#000000"/><stop offset="0.5655" stop-color="#000000"/><stop offset="0.5695" stop-color="#000000"/><stop offset="0.5735" stop-color="#000000"/><stop offset="0.5775" stop-color="#000000"/><stop offset="0.5814" stop-color="#000000"/><stop offset="0.5854" stop-color="#000000"/><stop offset="0.5894" stop-color="#000000"/><stop offset="0.5934" stop-color="#000000"/><stop offset="0.5974" stop-color="#000000"/><stop offset="0.6014" stop-color="#000000"/><stop offset="0.6054" stop-color="#000000"/><stop offset="0.6094" stop-color="#000000"/><stop offset="0.6133" stop-color="#000000"/><stop offset="0.6173" stop-color="#000000"/><stop offset="0.6213" stop-color="#000000"/><stop offset="0.6253" stop-color="#000000"/><stop offset="0.6293" stop-color="#000000"/><stop offset="0.6333" stop-color="#000000"/><stop offset="0.6373" stop-color="#000000"/><stop offset="0.6413" stop-color="#000000"/><stop offset="0.6452" stop-color="#000000"/><stop offset="0.6492" stop-color="#000000"/><stop offset="0.6532" stop-color="#000000"/><stop offset="0.6572" stop-color="#000000"/><stop offset="0.6612" stop-color="#000000"/><stop offset="0.6652" stop-color="#000000"/><stop offset="0.6692" stop-color="#000000"/><stop offset="0.6732" stop-color="#000000"/><stop offset="0.6771" stop-color="#000000"/><stop offset="0.6811" stop-color="#000000"/><stop offset="0.6851" stop-color="#000000"/><stop offset="0.6891" stop-color="#000000"/><stop offset="0.6931" stop-color="#000000"/><stop offset="0.6971" stop-color="#000000"/><stop offset="0.7011" stop-color="#000000"/><stop offset="0.7050" stop-color="#000000"/><stop offset="0.7090" stop-color="#000000"/><stop offset="0.7130" stop-color="#000000"/><stop offset="0.7170" stop-color="#000000"/><stop offset="0.7210" stop-color="#000000"/><stop offset="0.7250" stop-color="#000000"/><stop offset="0.7290" stop-color="#000000"/><stop offset="0.7330" stop-color="#000000"/><stop offset="0.7369" stop-color="#000000"/><stop offset="0.7409" stop-color="#000000"/><stop offset="0.7449" stop-color="#000000"/><stop offset="0.7489" stop-color="#000000"/><stop offset="0.7529" stop-color="#000000"/><stop offset="0.7569" stop-color="#000000"/><stop offset="0.7609" stop-color="#000000"/><stop offset="0.7649" stop-color="#000000"/><stop offset="0.7688" stop-color="#000000"/><stop offset="0.7728" stop-color="#000000"/><stop offset="0.7768" stop-color="#000000"/><stop offset="0.7808" stop-color="#000000"/><stop offset="0.7848" stop-color="#000000"/><stop offset="0.7888" stop-color="#000000"/><stop offset="0.7928" stop-color="#000000"/><stop offset="0.7968" stop-color="#000000"/><stop offset="0.8007" stop-color="#000000"/><stop offset="0.8047" stop-color="#000000"/><stop offset="0.8087" stop-color="#000000"/><stop offset="0.8127" stop-color="#000000"/><stop offset="0.8167" stop-color="#000000"/><stop offset="0.8207" stop-color="#000000"/><stop offset="0.8247" stop-color="#000000"/><stop offset="0.8286" stop-color="#000000"/><stop offset="0.8326" stop-color="#000000"/><stop offset="0.8366" stop-color="#000000"/><stop offset="0.8406" stop-color="#000000"/><stop offset="0.8446" stop-color="#000000"/><stop offset="0.8486" stop-color="#000000"/><stop offset="0.8526" stop-color="#000000"/><stop offset="0.8566" stop-color="#000000"/><stop offset="0.8605" stop-color="#000000"/><stop offset="0.8645" stop-color="#000000"/><stop offset="0.8685" stop-color="#000000"/><stop offset="0.8725" stop-color="#000000"/><stop offset="0.8765" stop-color="#000000"/><stop offset="0.8805" stop-color="#000000"/><stop offset="0.8845" stop-color="#000000"/><stop offset="0.8885" stop-color="#000000"/><stop offset="0.8924" stop-color="#000000"/><stop offset="0.8964" stop-color="#000000"/><stop offset="0.9004" stop-color="#000000"/><stop offset="0.9044" stop-color="#000000"/><stop offset="0.9084" stop-color="#000000"/><stop offset="0.9124" stop-color="#000000"/><stop offset="0.9164" stop-color="#000000"/><stop offset="0.9204" stop-color="#000000"/><stop offset="0.9243" stop-color="#000000"/><stop offset="0.9283" stop-color="#000000"/><stop offset="0.9323" stop-color="#000000"/><stop offset="0.9363" stop-color="#000000"/><stop offset="0.9403" stop-color="#000000"/><stop offset="0.9443" stop-color="#000000"/><stop offset="0.9483" stop-color="#000000"/><stop offset="0.9522" stop-color="#000000"/><stop offset="0.9562" stop-color="#000000"/><stop offset="0.9602" stop-color="#000000"/><stop offset="0.9642" stop-color="#000000"/><stop offset="0.9682" stop-color="#000000"/><stop offset="0.9722" stop-color="#000000"/><stop offset="0.9762" stop-color="#000000"/><stop offset="0.9802" stop-color="#000000"/><stop offset="0.9841" stop-color="#000000"/><stop offset="0.9881" stop-color="#000000"/><stop offset="0.9921" stop-color="#000000"/><stop offset="0.9961" stop-color="#000000"/></linearGradient></defs><rect x="14.5" y="385.5" width="1336" height="323" fill="#eff6fd" stroke="#6d6d6d" stroke-width="1"/><path d="M15.5 707.5 L15.5 386.5 L1349.5 386.5 L1349.5 707.5 Z" fill="none" stroke="#fbfdff" stroke-width="1"/><line x1="29.5" y1="402" x2="29.5" y2="707" stroke="#d0d3d6" stroke-width="1"/><line x1="42.5" y1="402" x2="42.5" y2="707" stroke="#d0d3d6" stroke-width="1"/><line x1="55.5" y1="402" x2="55.5" y2="707" stroke="#d0d3d6" stroke-width="1"/><line x1="69.5" y1="402" x2="69.5" y2="707" stroke="#d0d3d6" stroke-width="1"/><line x1="82.5" y1="402" x2="82.5" y2="707" stroke="#d0d3d6" stroke-width="1"/><line x1="95.5" y1="402" x2="95.5" y2="707" stroke="#d0d3d6" stroke-width="1"/><line x1="108.5" y1="402" x2="108.5" y2="707" stroke="#d0d3d6" stroke-width="1"/><line x1="122.5" y1="402" x2="122.5" y2="707" stroke="#85898d" stroke-width="1"/><line x1="135.5" y1="402" x2="135.5" y2="707" stroke="#d0d3d6" stroke-width="1"/><line x1="148.5" y1="402" x2="148.5" y2="707" stroke="#d0d3d6" stroke-width="1"/><line x1="162.5" y1="402" x2="162.5" y2="707" stroke="#d0d3d6" stroke-width="1"/><line x1="175.5" y1="402" x2="175.5" y2="707" stroke="#d0d3d6" stroke-width="1"/><line x1="188.5" y1="402" x2="188.5" y2="707" stroke="#d0d3d6" stroke-width="1"/><line x1="202.5" y1="402" x2="202.5" y2="707" stroke="#d0d3d6" stroke-width="1"/><line x1="215.5" y1="402" x2="215.5" y2="707" stroke="#d0d3d6" stroke-width="1"/><line x1="228.5" y1="402" x2="228.5" y2="707" stroke="#d0d3d6" stroke-width="1"/><line x1="242.5" y1="402" x2="242.5" y2="707" stroke="#d0d3d6" stroke-width="1"/><line x1="255.5" y1="402" x2="255.5" y2="707" stroke="#85898d" stroke-width="1"/><line x1="268.5" y1="402" x2="268.5" y2="707" stroke="#d0d3d6" stroke-width="1"/><line x1="282.5" y1="402" x2="282.5" y2="707" stroke="#d0d3d6" stroke-width="1"/><line x1="295.5" y1="402" x2="295.5" y2="707" stroke="#d0d3d6" stroke-width="1"/><line x1="308.5" y1="402" x2="308.5" y2="707" stroke="#d0d3d6" stroke-width="1"/><line x1="322.5" y1="402" x2="322.5" y2="707" stroke="#d0d3d6" stroke-width="1"/><line x1="335.5" y1="402" x2="335.5" y2="707" stroke="#d0d3d6" stroke-width="1"/><line x1="348.5" y1="402" x2="348.5" y2="707" stroke="#d0d3d6" stroke-width="1"/><line x1="362.5" y1="402" x2="362.5" y2="707" stroke="#d0d3d6" stroke-width="1"/><line x1="375.5" y1="402" x2="375.5" y2="707" stroke="#d0d3d6" stroke-width="1"/><line x1="388.5" y1="402" x2="388.5" y2="707" stroke="#85898d" stroke-width="1"/><line x1="401.5" y1="402" x2="401.5" y2="707" stroke="#d0d3d6" stroke-width="1"/><line x1="415.5" y1="402" x2="415.5" y2="707" stroke="#d0d3d6" stroke-width="1"/><line x1="428.5" y1="402" x2="428.5" y2="707" stroke="#d0d3d6" stroke-width="1"/><line x1="441.5" y1="402" x2="441.5" y2="707" stroke="#d0d3d6" stroke-width="1"/><line x1="455.5" y1="402" x2="455.5" y2="707" stroke="#d0d3d6" stroke-width="1"/><line x1="468.5" y1="402" x2="468.5" y2="707" stroke="#d0d3d6" stroke-width="1"/><line x1="481.5" y1="402" x2="481.5" y2="707" stroke="#d0d3d6" stroke-width="1"/><line x1="495.5" y1="402" x2="495.5" y2="707" stroke="#d0d3d6" stroke-width="1"/><line x1="508.5" y1="402" x2="508.5" y2="707" stroke="#d0d3d6" stroke-width="1"/><line x1="521.5" y1="402" x2="521.5" y2="707" stroke="#85898d" stroke-width="1"/><line x1="535.5" y1="402" x2="535.5" y2="707" stroke="#d0d3d6" stroke-width="1"/><line x1="548.5" y1="402" x2="548.5" y2="707" stroke="#d0d3d6" stroke-width="1"/><line x1="561.5" y1="402" x2="561.5" y2="707" stroke="#d0d3d6" stroke-width="1"/><line x1="575.5" y1="402" x2="575.5" y2="707" stroke="#d0d3d6" stroke-width="1"/><line x1="588.5" y1="402" x2="588.5" y2="707" stroke="#d0d3d6" stroke-width="1"/><line x1="601.5" y1="402" x2="601.5" y2="707" stroke="#d0d3d6" stroke-width="1"/><line x1="615.5" y1="402" x2="615.5" y2="707" stroke="#d0d3d6" stroke-width="1"/><line x1="628.5" y1="402" x2="628.5" y2="707" stroke="#d0d3d6" stroke-width="1"/><line x1="641.5" y1="402" x2="641.5" y2="707" stroke="#d0d3d6" stroke-width="1"/><line x1="654.5" y1="402" x2="654.5" y2="707" stroke="#85898d" stroke-width="1"/><line x1="668.5" y1="402" x2="668.5" y2="707" stroke="#d0d3d6" stroke-width="1"/><line x1="681.5" y1="402" x2="681.5" y2="707" stroke="#d0d3d6" stroke-width="1"/><line x1="694.5" y1="402" x2="694.5" y2="707" stroke="#d0d3d6" stroke-width="1"/><line x1="708.5" y1="402" x2="708.5" y2="707" stroke="#d0d3d6" stroke-width="1"/><line x1="721.5" y1="402" x2="721.5" y2="707" stroke="#d0d3d6" stroke-width="1"/><line x1="734.5" y1="402" x2="734.5" y2="707" stroke="#d0d3d6" stroke-width="1"/><line x1="748.5" y1="402" x2="748.5" y2="707" stroke="#d0d3d6" stroke-width="1"/><line x1="761.5" y1="402" x2="761.5" y2="707" stroke="#d0d3d6" stroke-width="1"/><line x1="774.5" y1="402" x2="774.5" y2="707" stroke="#d0d3d6" stroke-width="1"/><line x1="788.5" y1="402" x2="788.5" y2="707" stroke="#85898d" stroke-width="1"/><line x1="801.5" y1="402" x2="801.5" y2="707" stroke="#d0d3d6" stroke-width="1"/><line x1="814.5" y1="402" x2="814.5" y2="707" stroke="#d0d3d6" stroke-width="1"/><line x1="828.5" y1="402" x2="828.5" y2="707" stroke="#d0d3d6" stroke-width="1"/><line x1="841.5" y1="402" x2="841.5" y2="707" stroke="#d0d3d6" stroke-width="1"/><line x1="854.5" y1="402" x2="854.5" y2="707" stroke="#d0d3d6" stroke-width="1"/><line x1="868.5" y1="402" x2="868.5" y2="707" stroke="#d0d3d6" stroke-width="1"/><line x1="881.5" y1="402" x2="881.5" y2="707" stroke="#d0d3d6" stroke-width="1"/><line x1="894.5" y1="402" x2="894.5" y2="707" stroke="#d0d3d6" stroke-width="1"/><line x1="908.5" y1="402" x2="908.5" y2="707" stroke="#d0d3d6" stroke-width="1"/><line x1="921.5" y1="402" x2="921.5" y2="707" stroke="#85898d" stroke-width="1"/><line x1="934.5" y1="402" x2="934.5" y2="707" stroke="#d0d3d6" stroke-width="1"/><line x1="947.5" y1="402" x2="947.5" y2="707" stroke="#d0d3d6" stroke-width="1"/><line x1="961.5" y1="402" x2="961.5" y2="707" stroke="#d0d3d6" stroke-width="1"/><line x1="974.5" y1="402" x2="974.5" y2="707" stroke="#d0d3d6" stroke-width="1"/><line x1="987.5" y1="402" x2="987.5" y2="707" stroke="#d0d3d6" stroke-width="1"/><line x1="1001.5" y1="402" x2="1001.5" y2="707" stroke="#d0d3d6" stroke-width="1"/><line x1="1014.5" y1="402" x2="1014.5" y2="707" stroke="#d0d3d6" stroke-width="1"/><line x1="1027.5" y1="402" x2="1027.5" y2="707" stroke="#d0d3d6" stroke-width="1"/><line x1="1041.5" y1="402" x2="1041.5" y2="707" stroke="#d0d3d6" stroke-width="1"/><line x1="1054.5" y1="402" x2="1054.5" y2="707" stroke="#85898d" stroke-width="1"/><line x1="1067.5" y1="402" x2="1067.5" y2="707" stroke="#d0d3d6" stroke-width="1"/><line x1="1081.5" y1="402" x2="1081.5" y2="707" stroke="#d0d3d6" stroke-width="1"/><line x1="1094.5" y1="402" x2="1094.5" y2="707" stroke="#d0d3d6" stroke-width="1"/><line x1="1107.5" y1="402" x2="1107.5" y2="707" stroke="#d0d3d6" stroke-width="1"/><line x1="1121.5" y1="402" x2="1121.5" y2="707" stroke="#d0d3d6" stroke-width="1"/><line x1="1134.5" y1="402" x2="1134.5" y2="707" stroke="#d0d3d6" stroke-width="1"/><line x1="1147.5" y1="402" x2="1147.5" y2="707" stroke="#d0d3d6" stroke-width="1"/><line x1="1161.5" y1="402" x2="1161.5" y2="707" stroke="#d0d3d6" stroke-width="1"/><line x1="1174.5" y1="402" x2="1174.5" y2="707" stroke="#d0d3d6" stroke-width="1"/><line x1="1187.5" y1="402" x2="1187.5" y2="707" stroke="#85898d" stroke-width="1"/><line x1="1200.5" y1="402" x2="1200.5" y2="707" stroke="#d0d3d6" stroke-width="1"/><line x1="1214.5" y1="402" x2="1214.5" y2="707" stroke="#d0d3d6" stroke-width="1"/><line x1="1227.5" y1="402" x2="1227.5" y2="707" stroke="#d0d3d6" stroke-width="1"/><line x1="1240.5" y1="402" x2="1240.5" y2="707" stroke="#d0d3d6" stroke-width="1"/><line x1="1254.5" y1="402" x2="1254.5" y2="707" stroke="#d0d3d6" stroke-width="1"/><line x1="1267.5" y1="402" x2="1267.5" y2="707" stroke="#d0d3d6" stroke-width="1"/><line x1="1280.5" y1="402" x2="1280.5" y2="707" stroke="#d0d3d6" stroke-width="1"/><line x1="1294.5" y1="402" x2="1294.5" y2="707" stroke="#d0d3d6" stroke-width="1"/><line x1="1307.5" y1="402" x2="1307.5" y2="707" stroke="#d0d3d6" stroke-width="1"/><line x1="1320.5" y1="402" x2="1320.5" y2="707" stroke="#85898d" stroke-width="1"/><line x1="1334.5" y1="402" x2="1334.5" y2="707" stroke="#d0d3d6" stroke-width="1"/><line x1="1347.5" y1="402" x2="1347.5" y2="707" stroke="#d0d3d6" stroke-width="1"/><line x1="16" y1="416.5" x2="1349" y2="416.5" stroke="#d0d3d6" stroke-width="1"/><line x1="16" y1="431.5" x2="1349" y2="431.5" stroke="#d0d3d6" stroke-width="1"/><line x1="16" y1="447.5" x2="1349" y2="447.5" stroke="#d0d3d6" stroke-width="1"/><line x1="16" y1="462.5" x2="1349" y2="462.5" stroke="#d0d3d6" stroke-width="1"/><line x1="16" y1="477.5" x2="1349" y2="477.5" stroke="#d0d3d6" stroke-width="1"/><line x1="16" y1="492.5" x2="1349" y2="492.5" stroke="#d0d3d6" stroke-width="1"/><line x1="16" y1="508.5" x2="1349" y2="508.5" stroke="#d0d3d6" stroke-width="1"/><line x1="16" y1="523.5" x2="1349" y2="523.5" stroke="#d0d3d6" stroke-width="1"/><line x1="16" y1="538.5" x2="1349" y2="538.5" stroke="#d0d3d6" stroke-width="1"/><line x1="16" y1="552.5" x2="1349" y2="552.5" stroke="#f2fcdc" stroke-width="1"/><line x1="16" y1="553.5" x2="1349" y2="553.5" stroke="#9cc274" stroke-width="1"/><line x1="16" y1="569.5" x2="1349" y2="569.5" stroke="#d0d3d6" stroke-width="1"/><line x1="16" y1="584.5" x2="1349" y2="584.5" stroke="#d0d3d6" stroke-width="1"/><line x1="16" y1="599.5" x2="1349" y2="599.5" stroke="#d0d3d6" stroke-width="1"/><line x1="16" y1="614.5" x2="1349" y2="614.5" stroke="#d0d3d6" stroke-width="1"/><line x1="16" y1="630.5" x2="1349" y2="630.5" stroke="#d0d3d6" stroke-width="1"/><line x1="16" y1="645.5" x2="1349" y2="645.5" stroke="#d0d3d6" stroke-width="1"/><line x1="16" y1="660.5" x2="1349" y2="660.5" stroke="#d0d3d6" stroke-width="1"/><line x1="16" y1="675.5" x2="1349" y2="675.5" stroke="#d0d3d6" stroke-width="1"/><line x1="16" y1="691.5" x2="1349" y2="691.5" stroke="#d0d3d6" stroke-width="1"/><line x1="16" y1="400.5" x2="1349" y2="400.5" stroke="#f2fcdc" stroke-width="1"/><line x1="16" y1="401.5" x2="1349" y2="401.5" stroke="#9cc274" stroke-width="1"/><text x="120" y="397.5" font-family="Liberation Sans" font-size="10.6" fill="#111">400</text><text x="253" y="397.5" font-family="Liberation Sans" font-size="10.6" fill="#111">500</text><text x="386" y="397.5" font-family="Liberation Sans" font-size="10.6" fill="#111">600</text><text x="519" y="397.5" font-family="Liberation Sans" font-size="10.6" fill="#111">700</text><text x="652" y="397.5" font-family="Liberation Sans" font-size="10.6" fill="#111">800</text><text x="786" y="397.5" font-family="Liberation Sans" font-size="10.6" fill="#111">900</text><text x="919" y="397.5" font-family="Liberation Sans" font-size="10.6" fill="#111">1000</text><text x="1052" y="397.5" font-family="Liberation Sans" font-size="10.6" fill="#111">1100</text><text x="1185" y="397.5" font-family="Liberation Sans" font-size="10.6" fill="#111">1200</text><text x="1318" y="397.5" font-family="Liberation Sans" font-size="10.6" fill="#111">1300</text><path d="M16 706.5 L16.0 691.0 L18.0 689.0 L22.0 688.5 L26.0 689.0 L30.0 689.5 L33.0 687.5 L36.0 690.0 L40.0 689.0 L44.0 690.0 L48.0 688.0 L52.0 689.0 L55.0 690.5 L58.0 689.0 L62.0 690.0 L66.0 689.5 L70.0 691.5 L75.0 690.5 L80.0 691.0 L85.0 692.0 L90.0 691.5 L95.0 692.5 L100.0 692.0 L105.0 692.5 L110.0 692.0 L115.0 693.0 L118.0 692.0 L120.5 692.0 L124.0 683.0 L127.7 671.5 L129.0 673.0 L131.7 692.0 L135.0 693.0 L140.0 693.5 L142.5 692.8 L145.0 692.3 L147.5 692.9 L150.0 692.5 L152.5 691.5 L155.0 692.2 L157.5 691.7 L160.0 692.0 L163.2 692.0 L165.5 670.0 L167.0 652.0 L168.0 646.0 L169.3 625.0 L170.3 602.6 L171.2 604.0 L171.8 625.0 L172.8 648.0 L173.5 660.0 L174.5 692.0 L177.2 691.6 L180.0 693.0 L182.5 693.0 L185.0 692.3 L187.5 693.1 L190.0 693.5 L192.5 692.4 L195.0 692.2 L197.5 692.5 L200.0 692.5 L202.5 693.3 L205.0 692.5 L207.5 693.0 L210.0 694.0 L214.0 694.5 L217.0 694.6 L220.0 694.5 L223.0 694.9 L226.0 694.0 L229.2 692.0 L232.5 690.0 L236.0 660.0 L240.6 630.3 L242.0 634.0 L246.0 648.0 L253.0 668.0 L260.0 686.8 L263.0 690.0 L266.4 689.0 L270.0 691.0 L272.5 691.4 L275.0 693.2 L277.5 692.3 L280.0 694.0 L283.3 695.3 L286.6 695.6 L289.4 694.6 L292.2 693.8 L295.0 694.0 L299.0 691.8 L301.5 677.8 L303.4 681.6 L304.0 681.6 L305.3 662.5 L306.6 645.9 L308.9 621.6 L309.2 570.7 L310.0 509.0 L311.4 491.6 L313.0 505.0 L313.8 525.0 L314.5 548.0 L315.7 525.0 L316.0 522.7 L316.4 441.0 L317.8 440.8 L318.6 490.0 L319.6 522.7 L320.3 570.7 L320.9 579.9 L322.6 593.6 L323.7 609.6 L324.5 621.6 L327.0 645.9 L328.3 662.5 L330.2 674.0 L332.1 681.6 L334.7 686.7 L337.3 686.8 L339.8 688.0 L342.4 689.3 L346.2 692.5 L349.9 693.6 L353.5 694.0 L356.0 686.8 L357.5 651.3 L361.0 636.0 L365.6 622.3 L368.2 594.0 L370.2 572.1 L371.8 594.0 L372.7 622.6 L373.7 651.3 L374.4 622.6 L376.9 591.5 L379.4 622.6 L381.0 651.3 L383.0 640.0 L385.0 631.0 L387.0 645.0 L390.6 661.0 L395.4 639.4 L396.2 615.8 L397.0 565.4 L397.5 541.9 L397.7 512.8 L398.4 471.8 L398.6 430.8 L400.5 401.3 L401.3 430.8 L402.1 471.8 L403.8 512.8 L404.1 541.9 L405.5 565.4 L407.1 615.8 L408.8 639.4 L414.0 640.0 L416.0 632.0 L420.0 625.0 L422.5 618.0 L424.0 615.8 L425.6 632.6 L427.0 660.0 L429.7 683.5 L438.5 687.0 L443.5 688.2 L446.0 680.0 L448.5 673.4 L451.0 680.0 L454.8 687.5 L458.0 687.0 L460.6 685.5 L463.3 685.4 L468.0 690.0 L470.9 692.3 L473.9 694.6 L477.4 693.9 L480.9 693.1 L485.2 695.3 L489.0 691.0 L493.3 686.4 L497.2 690.3 L500.0 689.6 L500.7 688.0 L501.4 684.7 L502.8 666.3 L504.5 650.1 L506.0 666.3 L507.5 684.7 L508.0 687.5 L510.6 688.9 L513.1 684.7 L513.7 670.6 L514.1 659.3 L515.5 636.7 L517.3 624.7 L519.7 636.7 L521.9 659.3 L524.7 670.6 L526.8 684.7 L528.0 694.0 L533.0 695.0 L537.1 696.2 L541.1 691.2 L544.0 695.0 L547.2 697.3 L550.2 694.0 L552.2 676.0 L554.9 650.8 L557.9 676.0 L560.3 694.0 L563.0 697.0 L565.0 694.0 L566.0 676.0 L567.4 645.8 L570.4 629.7 L573.4 645.8 L574.4 676.0 L575.4 694.0 L578.0 697.0 L581.0 694.0 L581.5 676.0 L582.5 625.6 L583.3 575.0 L585.1 562.1 L587.0 575.0 L587.5 625.6 L589.6 676.0 L590.5 694.0 L592.0 694.0 L593.6 676.0 L596.2 644.8 L599.3 676.0 L601.3 694.0 L601.7 697.3 L604.4 697.1 L607.0 697.6 L609.7 697.0 L612.3 697.2 L615.0 698.3 L617.0 696.0 L618.4 684.7 L619.8 660.7 L621.5 645.0 L622.6 638.1 L623.8 645.0 L626.1 660.7 L626.8 669.2 L627.3 684.0 L627.5 653.6 L628.7 626.8 L629.6 614.0 L631.5 604.2 L633.2 614.0 L634.3 626.8 L634.6 653.6 L635.3 684.7 L636.0 687.5 L637.8 684.7 L638.1 636.7 L639.5 580.0 L640.4 534.5 L642.0 515.0 L643.3 509.8 L644.5 515.0 L645.8 534.5 L646.8 564.0 L648.0 636.7 L648.4 684.7 L649.0 687.5 L653.0 688.0 L657.9 684.7 L659.3 667.7 L661.1 651.5 L663.9 667.7 L665.6 684.7 L666.3 688.2 L670.0 688.0 L674.8 684.7 L675.1 656.4 L675.5 617.0 L676.2 600.0 L677.0 579.7 L679.7 564.2 L682.5 579.7 L682.8 600.0 L684.0 617.0 L684.7 656.4 L685.4 684.7 L686.1 687.5 L689.3 684.7 L691.0 672.0 L692.4 667.5 L693.8 672.0 L695.3 684.7 L698.0 697.5 L701.5 696.6 L705.0 697.0 L707.9 695.3 L710.8 693.2 L713.4 694.8 L716.0 697.0 L718.6 697.3 L721.3 698.5 L723.9 698.5 L726.6 698.2 L729.2 697.9 L731.8 698.7 L734.5 698.5 L737.1 697.6 L739.8 698.2 L742.4 698.0 L745.0 698.6 L747.7 698.3 L750.3 698.0 L752.9 697.2 L755.4 698.0 L758.0 697.0 L761.0 690.0 L761.3 685.2 L762.5 663.4 L763.7 639.2 L765.8 629.3 L768.0 639.2 L769.2 663.4 L770.4 685.2 L772.0 695.0 L775.0 694.0 L776.5 686.0 L778.3 682.1 L780.0 686.0 L784.9 698.5 L787.5 697.5 L790.0 698.0 L794.6 697.3 L797.3 697.9 L800.0 699.0 L802.5 699.1 L805.0 698.5 L807.5 698.8 L810.0 698.3 L812.5 699.0 L815.0 699.1 L817.5 698.9 L820.0 699.0 L822.6 698.3 L825.3 697.0 L828.8 692.9 L832.4 689.5 L835.0 693.3 L837.5 697.0 L840.0 697.6 L842.5 698.3 L845.0 699.0 L847.5 698.8 L850.0 699.2 L852.5 699.3 L855.0 698.8 L857.5 699.0 L860.0 698.4 L862.5 699.1 L865.0 699.0 L867.5 699.4 L870.0 699.2 L872.5 698.6 L875.0 698.7 L877.5 699.0 L880.0 698.3 L882.5 698.8 L885.0 698.5 L887.5 698.4 L890.0 698.4 L892.5 699.1 L895.0 698.4 L897.5 698.6 L900.0 699.0 L902.5 698.7 L905.0 699.2 L907.5 698.3 L910.0 698.6 L912.5 698.7 L915.0 699.0 L917.5 698.9 L920.0 698.9 L922.5 698.2 L925.0 698.3 L927.5 698.2 L930.0 698.5 L932.5 698.8 L935.0 698.9 L937.5 698.1 L940.0 698.2 L942.5 698.3 L945.0 698.3 L947.5 698.6 L950.0 698.8 L952.5 698.5 L955.0 698.2 L957.5 698.7 L960.0 699.0 L962.5 698.5 L965.0 698.4 L967.5 698.6 L970.0 698.1 L972.5 697.6 L975.0 697.5 L977.5 697.3 L980.0 697.0 L982.8 695.4 L985.6 695.4 L988.4 694.2 L992.0 698.0 L994.7 698.3 L997.3 698.6 L1000.0 698.5 L1002.5 698.7 L1005.0 698.3 L1007.5 698.3 L1010.0 698.0 L1012.5 698.6 L1015.0 698.0 L1017.5 698.0 L1020.0 698.2 L1022.5 698.2 L1025.0 698.4 L1027.5 698.1 L1030.0 698.1 L1032.5 698.2 L1035.0 698.2 L1037.5 698.5 L1040.0 698.2 L1042.5 699.1 L1045.0 698.9 L1047.5 698.4 L1050.0 698.5 L1052.5 698.6 L1055.0 698.7 L1057.5 698.4 L1060.0 699.0 L1063.5 698.2 L1067.0 697.0 L1069.7 698.1 L1072.3 698.1 L1075.0 699.0 L1077.5 698.7 L1080.0 698.2 L1082.5 698.1 L1085.0 698.3 L1087.5 698.1 L1090.0 698.6 L1092.5 697.8 L1095.0 697.5 L1097.5 698.4 L1100.0 698.0 L1104.0 697.0 L1106.6 696.9 L1109.1 696.5 L1111.7 696.9 L1114.2 696.3 L1116.8 696.9 L1119.3 697.4 L1121.9 697.2 L1124.4 697.1 L1127.0 696.6 L1129.6 696.7 L1132.1 696.5 L1134.7 697.1 L1137.2 696.9 L1139.8 697.2 L1142.3 696.7 L1144.9 696.5 L1147.4 697.2 L1150.0 697.0 L1154.0 695.0 L1158.2 688.4 L1162.0 695.0 L1166.0 697.0 L1168.6 697.3 L1171.2 697.2 L1173.8 697.1 L1176.5 697.0 L1179.1 696.9 L1181.7 696.3 L1184.3 696.6 L1186.9 696.4 L1189.5 696.0 L1192.2 695.9 L1194.8 696.2 L1197.4 696.1 L1200.0 696.5 L1202.5 696.5 L1205.0 696.8 L1207.5 696.2 L1210.0 696.7 L1212.5 696.7 L1215.0 696.7 L1217.5 696.0 L1220.0 695.8 L1222.5 695.8 L1225.0 695.7 L1227.5 695.7 L1230.0 696.1 L1232.5 696.4 L1235.0 696.3 L1237.5 695.9 L1240.0 696.0 L1242.5 696.1 L1245.0 695.3 L1247.5 695.9 L1250.0 696.2 L1252.5 696.0 L1255.0 695.9 L1257.5 695.6 L1260.0 695.2 L1262.5 695.9 L1265.0 695.4 L1267.5 695.8 L1270.0 696.0 L1272.5 695.3 L1275.0 695.3 L1277.5 695.9 L1280.0 695.5 L1282.0 694.5 L1284.6 694.7 L1287.1 694.1 L1289.7 694.2 L1292.3 694.3 L1294.9 695.2 L1297.4 695.1 L1300.0 695.0 L1302.5 694.4 L1305.0 695.1 L1307.5 695.3 L1310.0 694.9 L1312.5 694.5 L1315.0 694.7 L1317.5 694.2 L1320.0 694.0 L1322.5 695.0 L1325.0 694.6 L1327.5 694.4 L1330.0 694.5 L1332.6 694.9 L1335.1 694.5 L1337.7 695.1 L1340.3 695.2 L1342.9 694.6 L1345.4 694.8 L1348.0 695.3 L1349.5 695.3 L1349.5 706.5 Z" fill="url(#spec)"/><path d="M16.0 691.0 L18.0 689.0 L22.0 688.5 L26.0 689.0 L30.0 689.5 L33.0 687.5 L36.0 690.0 L40.0 689.0 L44.0 690.0 L48.0 688.0 L52.0 689.0 L55.0 690.5 L58.0 689.0 L62.0 690.0 L66.0 689.5 L70.0 691.5 L75.0 690.5 L80.0 691.0 L85.0 692.0 L90.0 691.5 L95.0 692.5 L100.0 692.0 L105.0 692.5 L110.0 692.0 L115.0 693.0 L118.0 692.0 L120.5 692.0 L124.0 683.0 L127.7 671.5 L129.0 673.0 L131.7 692.0 L135.0 693.0 L140.0 693.5 L142.5 692.8 L145.0 692.3 L147.5 692.9 L150.0 692.5 L152.5 691.5 L155.0 692.2 L157.5 691.7 L160.0 692.0 L163.2 692.0 L165.5 670.0 L167.0 652.0 L168.0 646.0 L169.3 625.0 L170.3 602.6 L171.2 604.0 L171.8 625.0 L172.8 648.0 L173.5 660.0 L174.5 692.0 L177.2 691.6 L180.0 693.0 L182.5 693.0 L185.0 692.3 L187.5 693.1 L190.0 693.5 L192.5 692.4 L195.0 692.2 L197.5 692.5 L200.0 692.5 L202.5 693.3 L205.0 692.5 L207.5 693.0 L210.0 694.0 L214.0 694.5 L217.0 694.6 L220.0 694.5 L223.0 694.9 L226.0 694.0 L229.2 692.0 L232.5 690.0 L236.0 660.0 L240.6 630.3 L242.0 634.0 L246.0 648.0 L253.0 668.0 L260.0 686.8 L263.0 690.0 L266.4 689.0 L270.0 691.0 L272.5 691.4 L275.0 693.2 L277.5 692.3 L280.0 694.0 L283.3 695.3 L286.6 695.6 L289.4 694.6 L292.2 693.8 L295.0 694.0 L299.0 691.8 L301.5 677.8 L303.4 681.6 L304.0 681.6 L305.3 662.5 L306.6 645.9 L308.9 621.6 L309.2 570.7 L310.0 509.0 L311.4 491.6 L313.0 505.0 L313.8 525.0 L314.5 548.0 L315.7 525.0 L316.0 522.7 L316.4 441.0 L317.8 440.8 L318.6 490.0 L319.6 522.7 L320.3 570.7 L320.9 579.9 L322.6 593.6 L323.7 609.6 L324.5 621.6 L327.0 645.9 L328.3 662.5 L330.2 674.0 L332.1 681.6 L334.7 686.7 L337.3 686.8 L339.8 688.0 L342.4 689.3 L346.2 692.5 L349.9 693.6 L353.5 694.0 L356.0 686.8 L357.5 651.3 L361.0 636.0 L365.6 622.3 L368.2 594.0 L370.2 572.1 L371.8 594.0 L372.7 622.6 L373.7 651.3 L374.4 622.6 L376.9 591.5 L379.4 622.6 L381.0 651.3 L383.0 640.0 L385.0 631.0 L387.0 645.0 L390.6 661.0 L395.4 639.4 L396.2 615.8 L397.0 565.4 L397.5 541.9 L397.7 512.8 L398.4 471.8 L398.6 430.8 L400.5 401.3 L401.3 430.8 L402.1 471.8 L403.8 512.8 L404.1 541.9 L405.5 565.4 L407.1 615.8 L408.8 639.4 L414.0 640.0 L416.0 632.0 L420.0 625.0 L422.5 618.0 L424.0 615.8 L425.6 632.6 L427.0 660.0 L429.7 683.5 L438.5 687.0 L443.5 688.2 L446.0 680.0 L448.5 673.4 L451.0 680.0 L454.8 687.5 L458.0 687.0 L460.6 685.5 L463.3 685.4 L468.0 690.0 L470.9 692.3 L473.9 694.6 L477.4 693.9 L480.9 693.1 L485.2 695.3 L489.0 691.0 L493.3 686.4 L497.2 690.3 L500.0 689.6 L500.7 688.0 L501.4 684.7 L502.8 666.3 L504.5 650.1 L506.0 666.3 L507.5 684.7 L508.0 687.5 L510.6 688.9 L513.1 684.7 L513.7 670.6 L514.1 659.3 L515.5 636.7 L517.3 624.7 L519.7 636.7 L521.9 659.3 L524.7 670.6 L526.8 684.7 L528.0 694.0 L533.0 695.0 L537.1 696.2 L541.1 691.2 L544.0 695.0 L547.2 697.3 L550.2 694.0 L552.2 676.0 L554.9 650.8 L557.9 676.0 L560.3 694.0 L563.0 697.0 L565.0 694.0 L566.0 676.0 L567.4 645.8 L570.4 629.7 L573.4 645.8 L574.4 676.0 L575.4 694.0 L578.0 697.0 L581.0 694.0 L581.5 676.0 L582.5 625.6 L583.3 575.0 L585.1 562.1 L587.0 575.0 L587.5 625.6 L589.6 676.0 L590.5 694.0 L592.0 694.0 L593.6 676.0 L596.2 644.8 L599.3 676.0 L601.3 694.0 L601.7 697.3 L604.4 697.1 L607.0 697.6 L609.7 697.0 L612.3 697.2 L615.0 698.3 L617.0 696.0 L618.4 684.7 L619.8 660.7 L621.5 645.0 L622.6 638.1 L623.8 645.0 L626.1 660.7 L626.8 669.2 L627.3 684.0 L627.5 653.6 L628.7 626.8 L629.6 614.0 L631.5 604.2 L633.2 614.0 L634.3 626.8 L634.6 653.6 L635.3 684.7 L636.0 687.5 L637.8 684.7 L638.1 636.7 L639.5 580.0 L640.4 534.5 L642.0 515.0 L643.3 509.8 L644.5 515.0 L645.8 534.5 L646.8 564.0 L648.0 636.7 L648.4 684.7 L649.0 687.5 L653.0 688.0 L657.9 684.7 L659.3 667.7 L661.1 651.5 L663.9 667.7 L665.6 684.7 L666.3 688.2 L670.0 688.0 L674.8 684.7 L675.1 656.4 L675.5 617.0 L676.2 600.0 L677.0 579.7 L679.7 564.2 L682.5 579.7 L682.8 600.0 L684.0 617.0 L684.7 656.4 L685.4 684.7 L686.1 687.5 L689.3 684.7 L691.0 672.0 L692.4 667.5 L693.8 672.0 L695.3 684.7 L698.0 697.5 L701.5 696.6 L705.0 697.0 L707.9 695.3 L710.8 693.2 L713.4 694.8 L716.0 697.0 L718.6 697.3 L721.3 698.5 L723.9 698.5 L726.6 698.2 L729.2 697.9 L731.8 698.7 L734.5 698.5 L737.1 697.6 L739.8 698.2 L742.4 698.0 L745.0 698.6 L747.7 698.3 L750.3 698.0 L752.9 697.2 L755.4 698.0 L758.0 697.0 L761.0 690.0 L761.3 685.2 L762.5 663.4 L763.7 639.2 L765.8 629.3 L768.0 639.2 L769.2 663.4 L770.4 685.2 L772.0 695.0 L775.0 694.0 L776.5 686.0 L778.3 682.1 L780.0 686.0 L784.9 698.5 L787.5 697.5 L790.0 698.0 L794.6 697.3 L797.3 697.9 L800.0 699.0 L802.5 699.1 L805.0 698.5 L807.5 698.8 L810.0 698.3 L812.5 699.0 L815.0 699.1 L817.5 698.9 L820.0 699.0 L822.6 698.3 L825.3 697.0 L828.8 692.9 L832.4 689.5 L835.0 693.3 L837.5 697.0 L840.0 697.6 L842.5 698.3 L845.0 699.0 L847.5 698.8 L850.0 699.2 L852.5 699.3 L855.0 698.8 L857.5 699.0 L860.0 698.4 L862.5 699.1 L865.0 699.0 L867.5 699.4 L870.0 699.2 L872.5 698.6 L875.0 698.7 L877.5 699.0 L880.0 698.3 L882.5 698.8 L885.0 698.5 L887.5 698.4 L890.0 698.4 L892.5 699.1 L895.0 698.4 L897.5 698.6 L900.0 699.0 L902.5 698.7 L905.0 699.2 L907.5 698.3 L910.0 698.6 L912.5 698.7 L915.0 699.0 L917.5 698.9 L920.0 698.9 L922.5 698.2 L925.0 698.3 L927.5 698.2 L930.0 698.5 L932.5 698.8 L935.0 698.9 L937.5 698.1 L940.0 698.2 L942.5 698.3 L945.0 698.3 L947.5 698.6 L950.0 698.8 L952.5 698.5 L955.0 698.2 L957.5 698.7 L960.0 699.0 L962.5 698.5 L965.0 698.4 L967.5 698.6 L970.0 698.1 L972.5 697.6 L975.0 697.5 L977.5 697.3 L980.0 697.0 L982.8 695.4 L985.6 695.4 L988.4 694.2 L992.0 698.0 L994.7 698.3 L997.3 698.6 L1000.0 698.5 L1002.5 698.7 L1005.0 698.3 L1007.5 698.3 L1010.0 698.0 L1012.5 698.6 L1015.0 698.0 L1017.5 698.0 L1020.0 698.2 L1022.5 698.2 L1025.0 698.4 L1027.5 698.1 L1030.0 698.1 L1032.5 698.2 L1035.0 698.2 L1037.5 698.5 L1040.0 698.2 L1042.5 699.1 L1045.0 698.9 L1047.5 698.4 L1050.0 698.5 L1052.5 698.6 L1055.0 698.7 L1057.5 698.4 L1060.0 699.0 L1063.5 698.2 L1067.0 697.0 L1069.7 698.1 L1072.3 698.1 L1075.0 699.0 L1077.5 698.7 L1080.0 698.2 L1082.5 698.1 L1085.0 698.3 L1087.5 698.1 L1090.0 698.6 L1092.5 697.8 L1095.0 697.5 L1097.5 698.4 L1100.0 698.0 L1104.0 697.0 L1106.6 696.9 L1109.1 696.5 L1111.7 696.9 L1114.2 696.3 L1116.8 696.9 L1119.3 697.4 L1121.9 697.2 L1124.4 697.1 L1127.0 696.6 L1129.6 696.7 L1132.1 696.5 L1134.7 697.1 L1137.2 696.9 L1139.8 697.2 L1142.3 696.7 L1144.9 696.5 L1147.4 697.2 L1150.0 697.0 L1154.0 695.0 L1158.2 688.4 L1162.0 695.0 L1166.0 697.0 L1168.6 697.3 L1171.2 697.2 L1173.8 697.1 L1176.5 697.0 L1179.1 696.9 L1181.7 696.3 L1184.3 696.6 L1186.9 696.4 L1189.5 696.0 L1192.2 695.9 L1194.8 696.2 L1197.4 696.1 L1200.0 696.5 L1202.5 696.5 L1205.0 696.8 L1207.5 696.2 L1210.0 696.7 L1212.5 696.7 L1215.0 696.7 L1217.5 696.0 L1220.0 695.8 L1222.5 695.8 L1225.0 695.7 L1227.5 695.7 L1230.0 696.1 L1232.5 696.4 L1235.0 696.3 L1237.5 695.9 L1240.0 696.0 L1242.5 696.1 L1245.0 695.3 L1247.5 695.9 L1250.0 696.2 L1252.5 696.0 L1255.0 695.9 L1257.5 695.6 L1260.0 695.2 L1262.5 695.9 L1265.0 695.4 L1267.5 695.8 L1270.0 696.0 L1272.5 695.3 L1275.0 695.3 L1277.5 695.9 L1280.0 695.5 L1282.0 694.5 L1284.6 694.7 L1287.1 694.1 L1289.7 694.2 L1292.3 694.3 L1294.9 695.2 L1297.4 695.1 L1300.0 695.0 L1302.5 694.4 L1305.0 695.1 L1307.5 695.3 L1310.0 694.9 L1312.5 694.5 L1315.0 694.7 L1317.5 694.2 L1320.0 694.0 L1322.5 695.0 L1325.0 694.6 L1327.5 694.4 L1330.0 694.5 L1332.6 694.9 L1335.1 694.5 L1337.7 695.1 L1340.3 695.2 L1342.9 694.6 L1345.4 694.8 L1348.0 695.3" fill="none" stroke="#1c3a10" stroke-width="1" stroke-opacity="0.9"/><line x1="65.5" y1="689.6" x2="65.5" y2="708" stroke="#e04848" stroke-opacity="0.75" stroke-width="1"/><line x1="127.5" y1="672.1" x2="127.5" y2="708" stroke="#e04848" stroke-opacity="0.75" stroke-width="1"/><line x1="170.5" y1="602.9" x2="170.5" y2="708" stroke="#e04848" stroke-opacity="0.75" stroke-width="1"/><line x1="240.5" y1="630.9" x2="240.5" y2="708" stroke="#e04848" stroke-opacity="0.75" stroke-width="1"/><line x1="316.5" y1="441.0" x2="316.5" y2="707" stroke="#e04848" stroke-opacity="0.8" stroke-width="1" stroke-dasharray="1 1"/><line x1="369.5" y1="579.8" x2="369.5" y2="708" stroke="#e04848" stroke-opacity="0.75" stroke-width="1"/><line x1="400.5" y1="401.3" x2="400.5" y2="708" stroke="#e04848" stroke-opacity="0.75" stroke-width="1"/><line x1="448.5" y1="673.4" x2="448.5" y2="708" stroke="#e04848" stroke-opacity="0.75" stroke-width="1"/><line x1="517.5" y1="625.7" x2="517.5" y2="708" stroke="#e04848" stroke-opacity="0.75" stroke-width="1"/><line x1="584.5" y1="566.4" x2="584.5" y2="708" stroke="#e04848" stroke-opacity="0.75" stroke-width="1"/><line x1="644.5" y1="515.0" x2="644.5" y2="708" stroke="#e04848" stroke-opacity="0.75" stroke-width="1"/><line x1="679.5" y1="565.3" x2="679.5" y2="708" stroke="#e04848" stroke-opacity="0.75" stroke-width="1"/><line x1="766.5" y1="632.5" x2="766.5" y2="708" stroke="#e04848" stroke-opacity="0.75" stroke-width="1"/><line x1="832.5" y1="689.6" x2="832.5" y2="708" stroke="#e04848" stroke-opacity="0.75" stroke-width="1"/><line x1="926.5" y1="698.3" x2="926.5" y2="708" stroke="#e04848" stroke-opacity="0.75" stroke-width="1"/><line x1="989.5" y1="695.4" x2="989.5" y2="708" stroke="#e04848" stroke-opacity="0.75" stroke-width="1"/><line x1="1067.5" y1="697.2" x2="1067.5" y2="708" stroke="#e04848" stroke-opacity="0.75" stroke-width="1"/><line x1="1103.5" y1="697.1" x2="1103.5" y2="708" stroke="#e04848" stroke-opacity="0.75" stroke-width="1"/><line x1="1158.5" y1="688.9" x2="1158.5" y2="708" stroke="#e04848" stroke-opacity="0.75" stroke-width="1"/><line x1="1200.5" y1="696.5" x2="1200.5" y2="708" stroke="#e04848" stroke-opacity="0.75" stroke-width="1"/><line x1="1282.5" y1="694.5" x2="1282.5" y2="708" stroke="#e04848" stroke-opacity="0.75" stroke-width="1"/><line x1="170.5" y1="402" x2="170.5" y2="602" stroke="#000" stroke-width="1" stroke-dasharray="1 1"/><line x1="316.5" y1="402" x2="316.5" y2="441" stroke="#000" stroke-width="1" stroke-dasharray="1 1"/><rect x="51.5" y="670.7" width="26" height="14" fill="#ffff00" stroke="#2f8a10" stroke-width="1"/><text x="64.5" y="682.2" text-anchor="middle" font-family="Liberation Sans" font-size="12" fill="#000">357</text><rect x="113.5" y="688.9" width="26" height="14" fill="#ffff00" stroke="#2f8a10" stroke-width="1"/><text x="126.5" y="700.4" text-anchor="middle" font-family="Liberation Sans" font-size="12" fill="#000">404</text><rect x="156.5" y="688.9" width="26" height="14" fill="#ffff00" stroke="#2f8a10" stroke-width="1"/><text x="169.5" y="700.4" text-anchor="middle" font-family="Liberation Sans" font-size="12" fill="#000">436</text><rect x="226.5" y="688.9" width="26" height="14" fill="#ffff00" stroke="#2f8a10" stroke-width="1"/><text x="239.5" y="700.4" text-anchor="middle" font-family="Liberation Sans" font-size="12" fill="#000">489</text><rect x="302.5" y="688.9" width="26" height="14" fill="#ffff00" stroke="#2f8a10" stroke-width="1"/><text x="315.5" y="700.4" text-anchor="middle" font-family="Liberation Sans" font-size="12" fill="#000">547</text><rect x="355.5" y="688.9" width="26" height="14" fill="#ffff00" stroke="#2f8a10" stroke-width="1"/><text x="368.5" y="700.4" text-anchor="middle" font-family="Liberation Sans" font-size="12" fill="#000">586</text><rect x="386.5" y="688.9" width="26" height="14" fill="#ffff00" stroke="#2f8a10" stroke-width="1"/><text x="399.5" y="700.4" text-anchor="middle" font-family="Liberation Sans" font-size="12" fill="#000">609</text><rect x="434.5" y="688.9" width="26" height="14" fill="#ffff00" stroke="#2f8a10" stroke-width="1"/><text x="447.5" y="700.4" text-anchor="middle" font-family="Liberation Sans" font-size="12" fill="#000">645</text><rect x="503.5" y="688.9" width="26" height="14" fill="#ffff00" stroke="#2f8a10" stroke-width="1"/><text x="516.5" y="700.4" text-anchor="middle" font-family="Liberation Sans" font-size="12" fill="#000">697</text><rect x="570.5" y="688.9" width="26" height="14" fill="#ffff00" stroke="#2f8a10" stroke-width="1"/><text x="583.5" y="700.4" text-anchor="middle" font-family="Liberation Sans" font-size="12" fill="#000">747</text><rect x="630.5" y="688.9" width="26" height="14" fill="#ffff00" stroke="#2f8a10" stroke-width="1"/><text x="643.5" y="700.4" text-anchor="middle" font-family="Liberation Sans" font-size="12" fill="#000">792</text><rect x="665.5" y="688.9" width="26" height="14" fill="#ffff00" stroke="#2f8a10" stroke-width="1"/><text x="678.5" y="700.4" text-anchor="middle" font-family="Liberation Sans" font-size="12" fill="#000">819</text><rect x="752.5" y="688.9" width="26" height="14" fill="#ffff00" stroke="#2f8a10" stroke-width="1"/><text x="765.5" y="700.4" text-anchor="middle" font-family="Liberation Sans" font-size="12" fill="#000">884</text><rect x="818.5" y="671.8" width="26" height="14" fill="#ffff00" stroke="#2f8a10" stroke-width="1"/><text x="831.5" y="683.3" text-anchor="middle" font-family="Liberation Sans" font-size="12" fill="#000">933</text><rect x="912.5" y="681.9" width="34" height="14" fill="#ffff00" stroke="#2f8a10" stroke-width="1"/><text x="929.5" y="693.4" text-anchor="middle" font-family="Liberation Sans" font-size="12" fill="#000">1004</text><rect x="975.5" y="676.8" width="34" height="14" fill="#ffff00" stroke="#2f8a10" stroke-width="1"/><text x="992.5" y="688.3" text-anchor="middle" font-family="Liberation Sans" font-size="12" fill="#000">1051</text><rect x="1053.5" y="679.9" width="34" height="14" fill="#ffff00" stroke="#2f8a10" stroke-width="1"/><text x="1070.5" y="691.4" text-anchor="middle" font-family="Liberation Sans" font-size="12" fill="#000">1110</text><rect x="1089.5" y="680.7" width="34" height="14" fill="#ffff00" stroke="#2f8a10" stroke-width="1"/><text x="1106.5" y="692.2" text-anchor="middle" font-family="Liberation Sans" font-size="12" fill="#000">1137</text><rect x="1144.5" y="670.9" width="34" height="14" fill="#ffff00" stroke="#2f8a10" stroke-width="1"/><text x="1161.5" y="682.4" text-anchor="middle" font-family="Liberation Sans" font-size="12" fill="#000">1178</text><rect x="1186.5" y="679.1" width="34" height="14" fill="#ffff00" stroke="#2f8a10" stroke-width="1"/><text x="1203.5" y="690.6" text-anchor="middle" font-family="Liberation Sans" font-size="12" fill="#000">1210</text><rect x="1268.5" y="677.6" width="34" height="14" fill="#ffff00" stroke="#2f8a10" stroke-width="1"/><text x="1285.5" y="689.1" text-anchor="middle" font-family="Liberation Sans" font-size="12" fill="#000">1271</text><rect x="156.5" y="386.5" width="26" height="14" fill="#ffff00" stroke="#c44a12" stroke-width="1"/><text x="169.5" y="398" text-anchor="middle" font-family="Liberation Sans" font-size="12" fill="#000">436</text><rect x="302.5" y="386.5" width="26" height="14" fill="#ffff00" stroke="#c44a12" stroke-width="1"/><text x="315.5" y="398" text-anchor="middle" font-family="Liberation Sans" font-size="12" fill="#000">546</text></svg>
<div class="r" style="left:1355px;top:386px;width:12px;height:323px;background:#f3f2dd;border-top:2px solid #717171;border-left:2px solid #717171;border-right:1px solid #fff;border-bottom:1px solid #fff;"></div>
<div class="r" style="left:8px;top:710px;width:1348px;height:26px;background:#fdfbe6;"></div>
<div class="t" style="left:18.5px;top:718.72px;font-size:12.1px;line-height:12.1px;color:#1a1a1a;font-family:'Liberation Sans', sans-serif;">Max: 608 nm</div>
<div class="r" style="left:922px;top:716px;width:71px;height:16px;border-radius:4px;background:linear-gradient(#f8f8ec,#e8e8d8 35%,#bdbdaa 75%,#9a9a88);"></div>
<div class="t" style="left:922.0px;width:71px;text-align:center;top:718.32px;font-size:10.8px;line-height:10.8px;color:#151515;font-family:'Liberation Sans', sans-serif;">Reference</div>
<div class="r" style="left:1000px;top:716px;width:44px;height:16px;border-radius:4px;background:linear-gradient(#f8f8ec,#e8e8d8 35%,#bdbdaa 75%,#9a9a88);"></div>
<div class="t" style="left:1000.0px;width:44px;text-align:center;top:718.32px;font-size:10.8px;line-height:10.8px;color:#151515;font-family:'Liberation Sans', sans-serif;">Dips</div>
<div class="r" style="left:1050px;top:716px;width:49px;height:15px;border-radius:4px;border:1px solid #e9a43c;background:radial-gradient(ellipse 62% 95% at 50% 45%,#fff57e 0%,#ffea4c 55%,#ffc41c 100%);"></div>
<div class="t" style="left:1050.0px;width:49px;text-align:center;top:719.04px;font-size:10.3px;line-height:10.3px;color:#5c5c40;font-family:'Liberation Sans', sans-serif;font-weight:bold;text-shadow:0 0 1px #fffbd0;">Peaks</div>
<div class="r" style="left:1105px;top:716px;width:55px;height:15px;border-radius:4px;border:1px solid #e9a43c;background:radial-gradient(ellipse 62% 95% at 50% 45%,#fff57e 0%,#ffea4c 55%,#ffc41c 100%);"></div>
<div class="t" style="left:1105.0px;width:55px;text-align:center;top:719.04px;font-size:10.3px;line-height:10.3px;color:#5c5c40;font-family:'Liberation Sans', sans-serif;font-weight:bold;text-shadow:0 0 1px #fffbd0;">Colors</div>
<div class="t" style="left:1192.5px;top:718.49px;font-size:10.6px;line-height:10.6px;color:#111;font-family:'Liberation Sans', sans-serif;">Filter</div>
<div class="r" style="left:1224px;top:714px;width:32px;height:16px;background:#fdf9ef;"></div>
<div class="t" style="left:1224.0px;width:32px;text-align:center;top:717.73px;font-size:11.5px;line-height:11.5px;color:#111;font-family:'Liberation Sans', sans-serif;">30</div>
<div class="r" style="left:1276px;top:716px;width:74px;height:15px;border-radius:4px;border:1px solid #e9a43c;background:radial-gradient(ellipse 62% 95% at 50% 45%,#fff57e 0%,#ffea4c 55%,#ffc41c 100%);"></div>
<div class="t" style="left:1276.0px;width:74px;text-align:center;top:719.04px;font-size:10.3px;line-height:10.3px;color:#5c5c40;font-family:'Liberation Sans', sans-serif;font-weight:bold;text-shadow:0 0 1px #fffbd0;">Trim scale</div>
</body></html>
